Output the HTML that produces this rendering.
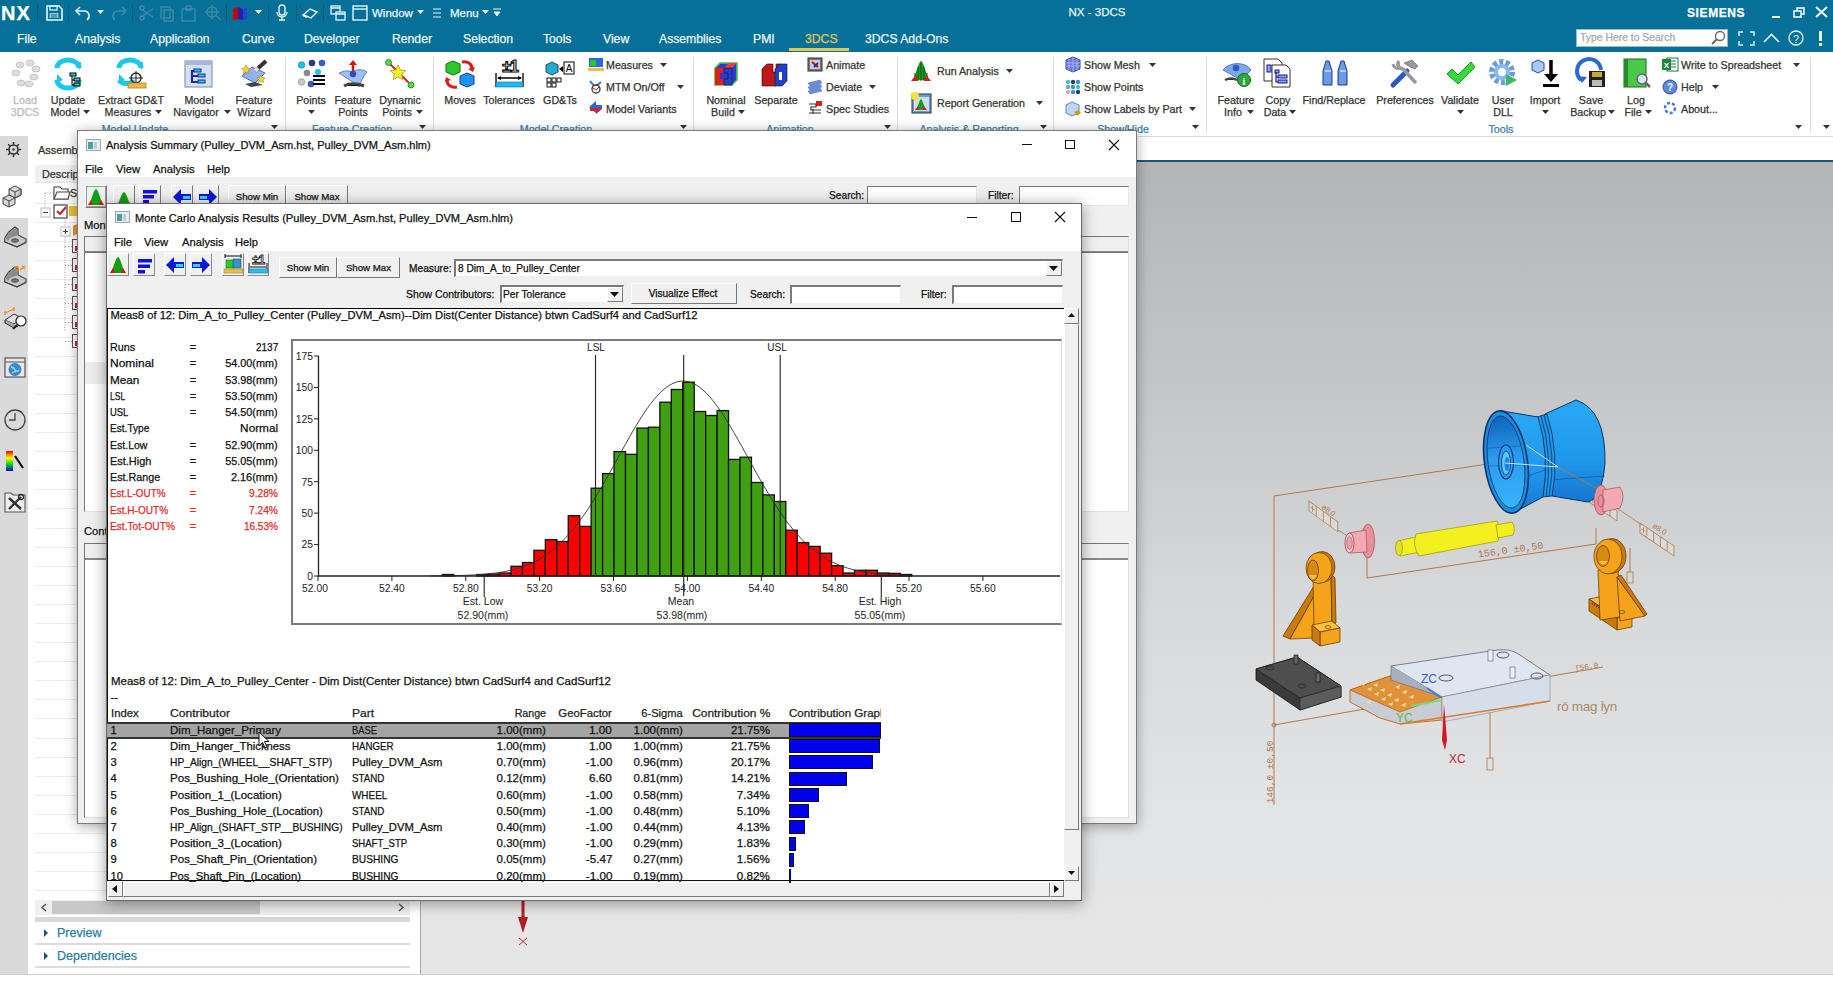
<!DOCTYPE html>
<html><head><meta charset="utf-8"><title>NX - 3DCS</title>
<style>
*{margin:0;padding:0;box-sizing:border-box}
html,body{width:1833px;height:992px;overflow:hidden;background:#fff;font-family:"Liberation Sans",sans-serif;font-size:12px;color:#222;position:relative}
.a{position:absolute}
.t{position:absolute;white-space:nowrap;-webkit-text-stroke:0.25px currentColor}
svg{overflow:visible}
</style></head><body>
<div class="a" style="left:0px;top:0px;width:1833px;height:52px;background:#067098"></div>
<div class="t" style="left:1px;top:0.0px;font-size:20px;line-height:26px;color:#fff;font-weight:bold;letter-spacing:1px">NX</div>
<div class="a" style="left:37px;top:5px;width:1px;height:16px;background:rgba(0,0,0,.18)"></div>
<div class="a" style="left:68px;top:5px;width:1px;height:16px;background:rgba(0,0,0,.18)"></div>
<div class="a" style="left:132px;top:5px;width:1px;height:16px;background:rgba(0,0,0,.18)"></div>
<div class="a" style="left:226px;top:5px;width:1px;height:16px;background:rgba(0,0,0,.18)"></div>
<div class="a" style="left:268px;top:5px;width:1px;height:16px;background:rgba(0,0,0,.18)"></div>
<div class="a" style="left:296px;top:5px;width:1px;height:16px;background:rgba(0,0,0,.18)"></div>
<div class="a" style="left:323px;top:5px;width:1px;height:16px;background:rgba(0,0,0,.18)"></div>
<svg class="a" style="left:46px;top:5px;" width="17" height="16" viewBox="0 0 17 16"><path d="M1 1h12l3 3v11H1z" fill="none" stroke="#dff" stroke-width="1.6"/><rect x="4" y="1" width="7" height="4" fill="none" stroke="#dff" stroke-width="1.2"/><rect x="3.5" y="8" width="9" height="5" fill="#9cc4d6"/><path d="M5 10h6M5 12h6" stroke="#067098" stroke-width="1"/></svg>
<svg class="a" style="left:74px;top:5px;" width="17" height="16" viewBox="0 0 17 16"><path d="M3 6h8a5 5 0 0 1 2 9" fill="none" stroke="#e6f4fa" stroke-width="1.6"/><path d="M6 2L2 6l4 4" fill="none" stroke="#e6f4fa" stroke-width="1.6"/></svg>
<svg class="a" style="left:97px;top:10px;" width="7" height="5" viewBox="0 0 7 5"><path d="M0 0h7L3.5 4z" fill="#e6f4fa"/></svg>
<svg class="a" style="left:111px;top:5px;" width="17" height="16" viewBox="0 0 17 16"><path d="M14 6H6a5 5 0 0 0-2 9" fill="none" stroke="#3f8aa9" stroke-width="1.6"/><path d="M11 2l4 4-4 4" fill="none" stroke="#3f8aa9" stroke-width="1.6"/></svg>
<svg class="a" style="left:139px;top:5px;" width="84" height="16" viewBox="0 0 84 16"><g fill="none" stroke="#3f8aa9" stroke-width="1.4"><path d="M2 12l12-8M2 4l12 8"/><circle cx="3" cy="13" r="2"/><circle cx="3" cy="3" r="2"/><rect x="22" y="2" width="9" height="11"/><rect x="25" y="5" width="9" height="11"/><rect x="43" y="4" width="13" height="12"/><rect x="47" y="1" width="5" height="4"/><circle cx="73" cy="7" r="5"/><path d="M66 7h14M73 0v14M76 10l6 5"/></g></svg>
<svg class="a" style="left:232px;top:6px;" width="16" height="14" viewBox="0 0 16 14"><path d="M1 3l5-2v12l-5 1z" fill="#c00"/><path d="M6 1l5 2v11l-5-1z" fill="#22a"/><path d="M11 3l4-1v11l-4 1z" fill="#2244dd"/></svg>
<svg class="a" style="left:255px;top:10px;" width="7" height="5" viewBox="0 0 7 5"><path d="M0 0h7L3.5 4z" fill="#e6f4fa"/></svg>
<svg class="a" style="left:276px;top:4px;" width="12" height="17" viewBox="0 0 12 17"><rect x="3" y="1" width="6" height="10" rx="3" fill="none" stroke="#e6f4fa" stroke-width="1.4"/><path d="M1 8a5 5 0 0 0 10 0M6 13v3M3 16h6" fill="none" stroke="#e6f4fa" stroke-width="1.3"/></svg>
<svg class="a" style="left:302px;top:7px;" width="16" height="12" viewBox="0 0 16 12"><path d="M1 8l7-6 7 3-6 6z" fill="none" stroke="#e6f4fa" stroke-width="1.4"/><path d="M1 8l4 2" stroke="#e6f4fa" stroke-width="2"/></svg>
<svg class="a" style="left:330px;top:5px;" width="16" height="16" viewBox="0 0 16 16"><g fill="none" stroke="#e6f4fa" stroke-width="1.3"><rect x="1" y="1" width="9" height="8"/><rect x="6" y="7" width="9" height="8" fill="#067098"/><path d="M1 3h9M6 9h9"/></g></svg>
<svg class="a" style="left:352px;top:5px;" width="16" height="16" viewBox="0 0 16 16"><g fill="none" stroke="#e6f4fa" stroke-width="1.4"><rect x="1" y="1" width="14" height="14"/><path d="M1 4h14"/></g></svg>
<div class="t" style="left:372px;top:5.5px;font-size:11.5px;line-height:15px;color:#eaf6fb;font-weight:normal;">Window</div>
<svg class="a" style="left:417px;top:10px;" width="7" height="5" viewBox="0 0 7 5"><path d="M0 0h7L3.5 4z" fill="#e6f4fa"/></svg>
<svg class="a" style="left:433px;top:8px;" width="8" height="10" viewBox="0 0 8 10"><path d="M0 1h8M0 5h8M0 9h8" stroke="#e6f4fa" stroke-width="1.2"/></svg>
<div class="t" style="left:450px;top:5.5px;font-size:11.5px;line-height:15px;color:#eaf6fb;font-weight:normal;">Menu</div>
<svg class="a" style="left:482px;top:10px;" width="7" height="5" viewBox="0 0 7 5"><path d="M0 0h7L3.5 4z" fill="#e6f4fa"/></svg>
<svg class="a" style="left:493px;top:8px;" width="8" height="9" viewBox="0 0 8 9"><path d="M0 1h8M1 4h6L4 8z" stroke="#e6f4fa" fill="#e6f4fa" stroke-width="1"/></svg>
<div class="t" style="left:797px;width:600px;text-align:center;top:4.5px;font-size:11.5px;line-height:15px;color:#e6f2f7;font-weight:normal;">NX - 3DCS</div>
<div class="t" style="left:1687px;top:5.0px;font-size:12px;line-height:16px;color:#fff;font-weight:bold;letter-spacing:0.6px">SIEMENS</div>
<div class="a" style="left:1772px;top:16px;width:8px;height:2px;background:#fff"></div>
<svg class="a" style="left:1793px;top:7px;" width="12" height="12" viewBox="0 0 12 12"><g fill="none" stroke="#fff" stroke-width="1.5"><rect x="1" y="4" width="7" height="6"/><path d="M4 4V1h7v6H8"/></g></svg>
<svg class="a" style="left:1815px;top:6px;" width="13" height="12" viewBox="0 0 13 12"><path d="M1 1l11 10M12 1L1 11" stroke="#fff" stroke-width="1.8"/></svg>
<div class="t" style="left:17px;top:31.0px;font-size:12.2px;line-height:16px;color:#eaf6fb;font-weight:normal;">File</div>
<div class="t" style="left:75px;top:31.0px;font-size:12.2px;line-height:16px;color:#eaf6fb;font-weight:normal;">Analysis</div>
<div class="t" style="left:150px;top:31.0px;font-size:12.2px;line-height:16px;color:#eaf6fb;font-weight:normal;">Application</div>
<div class="t" style="left:242px;top:31.0px;font-size:12.2px;line-height:16px;color:#eaf6fb;font-weight:normal;">Curve</div>
<div class="t" style="left:304px;top:31.0px;font-size:12.2px;line-height:16px;color:#eaf6fb;font-weight:normal;">Developer</div>
<div class="t" style="left:392px;top:31.0px;font-size:12.2px;line-height:16px;color:#eaf6fb;font-weight:normal;">Render</div>
<div class="t" style="left:463px;top:31.0px;font-size:12.2px;line-height:16px;color:#eaf6fb;font-weight:normal;">Selection</div>
<div class="t" style="left:543px;top:31.0px;font-size:12.2px;line-height:16px;color:#eaf6fb;font-weight:normal;">Tools</div>
<div class="t" style="left:603px;top:31.0px;font-size:12.2px;line-height:16px;color:#eaf6fb;font-weight:normal;">View</div>
<div class="t" style="left:659px;top:31.0px;font-size:12.2px;line-height:16px;color:#eaf6fb;font-weight:normal;">Assemblies</div>
<div class="t" style="left:753px;top:31.0px;font-size:12.2px;line-height:16px;color:#eaf6fb;font-weight:normal;">PMI</div>
<div class="t" style="left:805px;top:31.0px;font-size:12.2px;line-height:16px;color:#e3c655;font-weight:normal;">3DCS</div>
<div class="t" style="left:865px;top:31.0px;font-size:12.2px;line-height:16px;color:#eaf6fb;font-weight:normal;">3DCS Add-Ons</div>
<div class="a" style="left:789px;top:48px;width:60px;height:3px;background:#e3c655"></div>
<div class="a" style="left:1576px;top:29px;width:152px;height:18px;background:#fff;border:1px solid #9fb9c6"></div>
<div class="t" style="left:1580px;top:31.0px;font-size:10.4px;line-height:14px;color:#a9a9a9;font-weight:normal;">Type Here to Search</div>
<svg class="a" style="left:1710px;top:30px;" width="16" height="16" viewBox="0 0 16 16"><circle cx="10" cy="6" r="4.5" fill="none" stroke="#666" stroke-width="1.3"/><path d="M7 9l-5 5" stroke="#666" stroke-width="2"/></svg>
<svg class="a" style="left:1738px;top:31px;" width="17" height="15" viewBox="0 0 17 15"><path d="M1 5V1h4M12 1h4v4M16 10v4h-4M5 14H1v-4" fill="none" stroke="#d6eef6" stroke-width="1.5"/></svg>
<svg class="a" style="left:1763px;top:33px;" width="17" height="10" viewBox="0 0 17 10"><path d="M1 9l7.5-7.5L16 9" fill="none" stroke="#e6f4fa" stroke-width="1.6"/></svg>
<svg class="a" style="left:1788px;top:30px;" width="16" height="16" viewBox="0 0 16 16"><circle cx="8" cy="8" r="7" fill="none" stroke="#e6f4fa" stroke-width="1.3"/><text x="8" y="12.5" font-size="11" text-anchor="middle" fill="#e6f4fa" font-family="Liberation Sans">?</text></svg>
<div class="a" style="left:1819px;top:31px;width:3px;height:10px;background:#e6f4fa"></div>
<div class="a" style="left:1819px;top:43px;width:3px;height:3px;background:#e6f4fa"></div>
<div class="a" style="left:0px;top:52px;width:1833px;height:85px;background:#fff;border-bottom:1px solid #d0d0d0"></div>
<div class="a" style="left:285px;top:57px;width:1px;height:76px;background:#dedede"></div>
<div class="a" style="left:433px;top:57px;width:1px;height:76px;background:#dedede"></div>
<div class="a" style="left:693px;top:57px;width:1px;height:76px;background:#dedede"></div>
<div class="a" style="left:897px;top:57px;width:1px;height:76px;background:#dedede"></div>
<div class="a" style="left:1053px;top:57px;width:1px;height:76px;background:#dedede"></div>
<div class="a" style="left:1206px;top:57px;width:1px;height:76px;background:#dedede"></div>
<div class="a" style="left:1810px;top:57px;width:1px;height:76px;background:#dedede"></div>
<div class="t" style="left:-275px;width:600px;text-align:center;top:92.5px;font-size:10.7px;line-height:14px;color:#b9b9b9;font-weight:normal;">Load</div>
<div class="t" style="left:-275px;width:600px;text-align:center;top:105.0px;font-size:10.7px;line-height:14px;color:#b9b9b9;font-weight:normal;">3DCS</div>
<div class="t" style="left:-232px;width:600px;text-align:center;top:92.5px;font-size:10.7px;line-height:14px;color:#333;font-weight:normal;">Update</div>
<div class="t" style="left:-235px;width:600px;text-align:center;top:105.0px;font-size:10.7px;line-height:14px;color:#333;font-weight:normal;">Model</div>
<svg class="a" style="left:83px;top:110px;" width="7" height="4" viewBox="0 0 7 4"><path d="M0 0h7L3.5 4z" fill="#333"/></svg>
<div class="t" style="left:-169px;width:600px;text-align:center;top:92.5px;font-size:10.7px;line-height:14px;color:#333;font-weight:normal;">Extract GD&amp;T</div>
<div class="t" style="left:-172px;width:600px;text-align:center;top:105.0px;font-size:10.7px;line-height:14px;color:#333;font-weight:normal;">Measures</div>
<svg class="a" style="left:155px;top:110px;" width="7" height="4" viewBox="0 0 7 4"><path d="M0 0h7L3.5 4z" fill="#333"/></svg>
<div class="t" style="left:-101px;width:600px;text-align:center;top:92.5px;font-size:10.7px;line-height:14px;color:#333;font-weight:normal;">Model</div>
<div class="t" style="left:-104px;width:600px;text-align:center;top:105.0px;font-size:10.7px;line-height:14px;color:#333;font-weight:normal;">Navigator</div>
<svg class="a" style="left:224px;top:110px;" width="7" height="4" viewBox="0 0 7 4"><path d="M0 0h7L3.5 4z" fill="#333"/></svg>
<div class="t" style="left:-46px;width:600px;text-align:center;top:92.5px;font-size:10.7px;line-height:14px;color:#333;font-weight:normal;">Feature</div>
<div class="t" style="left:-46px;width:600px;text-align:center;top:105.0px;font-size:10.7px;line-height:14px;color:#333;font-weight:normal;">Wizard</div>
<div class="t" style="left:11px;width:600px;text-align:center;top:92.5px;font-size:10.7px;line-height:14px;color:#333;font-weight:normal;">Points</div>
<svg class="a" style="left:308px;top:110px;" width="7" height="4" viewBox="0 0 7 4"><path d="M0 0h7L3.5 4z" fill="#333"/></svg>
<div class="t" style="left:53px;width:600px;text-align:center;top:92.5px;font-size:10.7px;line-height:14px;color:#333;font-weight:normal;">Feature</div>
<div class="t" style="left:53px;width:600px;text-align:center;top:105.0px;font-size:10.7px;line-height:14px;color:#333;font-weight:normal;">Points</div>
<div class="t" style="left:100px;width:600px;text-align:center;top:92.5px;font-size:10.7px;line-height:14px;color:#333;font-weight:normal;">Dynamic</div>
<div class="t" style="left:97px;width:600px;text-align:center;top:105.0px;font-size:10.7px;line-height:14px;color:#333;font-weight:normal;">Points</div>
<svg class="a" style="left:416px;top:110px;" width="7" height="4" viewBox="0 0 7 4"><path d="M0 0h7L3.5 4z" fill="#333"/></svg>
<div class="t" style="left:160px;width:600px;text-align:center;top:92.5px;font-size:10.7px;line-height:14px;color:#333;font-weight:normal;">Moves</div>
<div class="t" style="left:209px;width:600px;text-align:center;top:92.5px;font-size:10.7px;line-height:14px;color:#333;font-weight:normal;">Tolerances</div>
<div class="t" style="left:260px;width:600px;text-align:center;top:92.5px;font-size:10.7px;line-height:14px;color:#333;font-weight:normal;">GD&amp;Ts</div>
<div class="t" style="left:606px;top:58.0px;font-size:10.7px;line-height:14px;color:#333;font-weight:normal;">Measures</div>
<svg class="a" style="left:660px;top:63px;" width="7" height="4" viewBox="0 0 7 4"><path d="M0 0h7L3.5 4z" fill="#333"/></svg>
<div class="t" style="left:606px;top:80.0px;font-size:10.7px;line-height:14px;color:#333;font-weight:normal;">MTM On/Off</div>
<svg class="a" style="left:677px;top:85px;" width="7" height="4" viewBox="0 0 7 4"><path d="M0 0h7L3.5 4z" fill="#333"/></svg>
<div class="t" style="left:606px;top:102.0px;font-size:10.7px;line-height:14px;color:#333;font-weight:normal;">Model Variants</div>
<div class="t" style="left:426px;width:600px;text-align:center;top:92.5px;font-size:10.7px;line-height:14px;color:#333;font-weight:normal;">Nominal</div>
<div class="t" style="left:423px;width:600px;text-align:center;top:105.0px;font-size:10.7px;line-height:14px;color:#333;font-weight:normal;">Build</div>
<svg class="a" style="left:738px;top:110px;" width="7" height="4" viewBox="0 0 7 4"><path d="M0 0h7L3.5 4z" fill="#333"/></svg>
<div class="t" style="left:476px;width:600px;text-align:center;top:92.5px;font-size:10.7px;line-height:14px;color:#333;font-weight:normal;">Separate</div>
<div class="t" style="left:826px;top:58.0px;font-size:10.7px;line-height:14px;color:#333;font-weight:normal;">Animate</div>
<div class="t" style="left:826px;top:80.0px;font-size:10.7px;line-height:14px;color:#333;font-weight:normal;">Deviate</div>
<svg class="a" style="left:869px;top:85px;" width="7" height="4" viewBox="0 0 7 4"><path d="M0 0h7L3.5 4z" fill="#333"/></svg>
<div class="t" style="left:826px;top:102.0px;font-size:10.7px;line-height:14px;color:#333;font-weight:normal;">Spec Studies</div>
<div class="t" style="left:937px;top:64.0px;font-size:10.7px;line-height:14px;color:#333;font-weight:normal;">Run Analysis</div>
<svg class="a" style="left:1006px;top:69px;" width="7" height="4" viewBox="0 0 7 4"><path d="M0 0h7L3.5 4z" fill="#333"/></svg>
<div class="t" style="left:937px;top:96.0px;font-size:10.7px;line-height:14px;color:#333;font-weight:normal;">Report Generation</div>
<svg class="a" style="left:1036px;top:101px;" width="7" height="4" viewBox="0 0 7 4"><path d="M0 0h7L3.5 4z" fill="#333"/></svg>
<div class="t" style="left:1084px;top:58.0px;font-size:10.7px;line-height:14px;color:#333;font-weight:normal;">Show Mesh</div>
<svg class="a" style="left:1149px;top:63px;" width="7" height="4" viewBox="0 0 7 4"><path d="M0 0h7L3.5 4z" fill="#333"/></svg>
<div class="t" style="left:1084px;top:80.0px;font-size:10.7px;line-height:14px;color:#333;font-weight:normal;">Show Points</div>
<div class="t" style="left:1084px;top:102.0px;font-size:10.7px;line-height:14px;color:#333;font-weight:normal;">Show Labels by Part</div>
<svg class="a" style="left:1189px;top:107px;" width="7" height="4" viewBox="0 0 7 4"><path d="M0 0h7L3.5 4z" fill="#333"/></svg>
<div class="t" style="left:936px;width:600px;text-align:center;top:92.5px;font-size:10.7px;line-height:14px;color:#333;font-weight:normal;">Feature</div>
<div class="t" style="left:933px;width:600px;text-align:center;top:105.0px;font-size:10.7px;line-height:14px;color:#333;font-weight:normal;">Info</div>
<svg class="a" style="left:1247px;top:110px;" width="7" height="4" viewBox="0 0 7 4"><path d="M0 0h7L3.5 4z" fill="#333"/></svg>
<div class="t" style="left:978px;width:600px;text-align:center;top:92.5px;font-size:10.7px;line-height:14px;color:#333;font-weight:normal;">Copy</div>
<div class="t" style="left:975px;width:600px;text-align:center;top:105.0px;font-size:10.7px;line-height:14px;color:#333;font-weight:normal;">Data</div>
<svg class="a" style="left:1289px;top:110px;" width="7" height="4" viewBox="0 0 7 4"><path d="M0 0h7L3.5 4z" fill="#333"/></svg>
<div class="t" style="left:1034px;width:600px;text-align:center;top:92.5px;font-size:10.7px;line-height:14px;color:#333;font-weight:normal;">Find/Replace</div>
<div class="t" style="left:1105px;width:600px;text-align:center;top:92.5px;font-size:10.7px;line-height:14px;color:#333;font-weight:normal;">Preferences</div>
<div class="t" style="left:1160px;width:600px;text-align:center;top:92.5px;font-size:10.7px;line-height:14px;color:#333;font-weight:normal;">Validate</div>
<svg class="a" style="left:1457px;top:110px;" width="7" height="4" viewBox="0 0 7 4"><path d="M0 0h7L3.5 4z" fill="#333"/></svg>
<div class="t" style="left:1203px;width:600px;text-align:center;top:92.5px;font-size:10.7px;line-height:14px;color:#333;font-weight:normal;">User</div>
<div class="t" style="left:1203px;width:600px;text-align:center;top:105.0px;font-size:10.7px;line-height:14px;color:#333;font-weight:normal;">DLL</div>
<div class="t" style="left:1245px;width:600px;text-align:center;top:92.5px;font-size:10.7px;line-height:14px;color:#333;font-weight:normal;">Import</div>
<svg class="a" style="left:1542px;top:110px;" width="7" height="4" viewBox="0 0 7 4"><path d="M0 0h7L3.5 4z" fill="#333"/></svg>
<div class="t" style="left:1291px;width:600px;text-align:center;top:92.5px;font-size:10.7px;line-height:14px;color:#333;font-weight:normal;">Save</div>
<div class="t" style="left:1288px;width:600px;text-align:center;top:105.0px;font-size:10.7px;line-height:14px;color:#333;font-weight:normal;">Backup</div>
<svg class="a" style="left:1608px;top:110px;" width="7" height="4" viewBox="0 0 7 4"><path d="M0 0h7L3.5 4z" fill="#333"/></svg>
<div class="t" style="left:1336px;width:600px;text-align:center;top:92.5px;font-size:10.7px;line-height:14px;color:#333;font-weight:normal;">Log</div>
<div class="t" style="left:1333px;width:600px;text-align:center;top:105.0px;font-size:10.7px;line-height:14px;color:#333;font-weight:normal;">File</div>
<svg class="a" style="left:1645px;top:110px;" width="7" height="4" viewBox="0 0 7 4"><path d="M0 0h7L3.5 4z" fill="#333"/></svg>
<div class="t" style="left:1681px;top:58.0px;font-size:10.7px;line-height:14px;color:#333;font-weight:normal;">Write to Spreadsheet</div>
<svg class="a" style="left:1793px;top:63px;" width="7" height="4" viewBox="0 0 7 4"><path d="M0 0h7L3.5 4z" fill="#333"/></svg>
<div class="t" style="left:1681px;top:80.0px;font-size:10.7px;line-height:14px;color:#333;font-weight:normal;">Help</div>
<svg class="a" style="left:1712px;top:85px;" width="7" height="4" viewBox="0 0 7 4"><path d="M0 0h7L3.5 4z" fill="#333"/></svg>
<div class="t" style="left:1681px;top:102.0px;font-size:10.7px;line-height:14px;color:#333;font-weight:normal;">About...</div>
<div class="t" style="left:-165px;width:600px;text-align:center;top:122.0px;font-size:10.7px;line-height:14px;color:#3b7fa6;font-weight:normal;">Model Update</div>
<div class="t" style="left:52px;width:600px;text-align:center;top:122.0px;font-size:10.7px;line-height:14px;color:#3b7fa6;font-weight:normal;">Feature Creation</div>
<div class="t" style="left:256px;width:600px;text-align:center;top:122.0px;font-size:10.7px;line-height:14px;color:#3b7fa6;font-weight:normal;">Model Creation</div>
<div class="t" style="left:490px;width:600px;text-align:center;top:122.0px;font-size:10.7px;line-height:14px;color:#3b7fa6;font-weight:normal;">Animation</div>
<div class="t" style="left:669px;width:600px;text-align:center;top:122.0px;font-size:10.7px;line-height:14px;color:#3b7fa6;font-weight:normal;">Analysis &amp; Reporting</div>
<div class="t" style="left:823px;width:600px;text-align:center;top:122.0px;font-size:10.7px;line-height:14px;color:#3b7fa6;font-weight:normal;">Show/Hide</div>
<div class="t" style="left:1201px;width:600px;text-align:center;top:122.0px;font-size:10.7px;line-height:14px;color:#3b7fa6;font-weight:normal;">Tools</div>
<svg class="a" style="left:271px;top:125px;" width="7" height="4" viewBox="0 0 7 4"><path d="M0 0h7L3.5 4z" fill="#333"/></svg>
<svg class="a" style="left:419px;top:125px;" width="7" height="4" viewBox="0 0 7 4"><path d="M0 0h7L3.5 4z" fill="#333"/></svg>
<svg class="a" style="left:680px;top:125px;" width="7" height="4" viewBox="0 0 7 4"><path d="M0 0h7L3.5 4z" fill="#333"/></svg>
<svg class="a" style="left:884px;top:125px;" width="7" height="4" viewBox="0 0 7 4"><path d="M0 0h7L3.5 4z" fill="#333"/></svg>
<svg class="a" style="left:1040px;top:125px;" width="7" height="4" viewBox="0 0 7 4"><path d="M0 0h7L3.5 4z" fill="#333"/></svg>
<svg class="a" style="left:1192px;top:125px;" width="7" height="4" viewBox="0 0 7 4"><path d="M0 0h7L3.5 4z" fill="#333"/></svg>
<svg class="a" style="left:1795px;top:125px;" width="7" height="4" viewBox="0 0 7 4"><path d="M0 0h7L3.5 4z" fill="#333"/></svg>
<svg class="a" style="left:1823px;top:125px;" width="7" height="4" viewBox="0 0 7 4"><path d="M0 0h7L3.5 4z" fill="#333"/></svg>
<svg class="a" style="left:12px;top:59px;" width="28" height="28" viewBox="0 0 28 28"><g fill="#ddd" stroke="#c8c8c8"><ellipse cx="8" cy="6" rx="4" ry="3"/><ellipse cx="18" cy="4" rx="4" ry="3"/><ellipse cx="24" cy="10" rx="4" ry="3"/><ellipse cx="4" cy="14" rx="4" ry="3"/><ellipse cx="22" cy="18" rx="4" ry="3"/><ellipse cx="9" cy="24" rx="4" ry="3"/><ellipse cx="17" cy="25" rx="4" ry="3"/></g></svg>
<svg class="a" style="left:54px;top:59px;" width="30" height="30" viewBox="0 0 30 30"><path d="M3 9a11 8 0 0 1 22 0" fill="none" stroke="#19c8ee" stroke-width="5"/><path d="M20 3l7 0-1 8z" fill="#19c8ee"/><path d="M25 21a11 8 0 0 1-22 0" fill="none" stroke="#19c8ee" stroke-width="5"/><path d="M3 15l0 9 6-3z" fill="#19c8ee"/><g fill="#3cc" stroke="#000" stroke-width="1"><rect x="16" y="14" width="6" height="3"/><rect x="20" y="19" width="6" height="3"/><rect x="20" y="24" width="6" height="3"/></g><path d="M18 17v9h2M18 21h2" stroke="#000" fill="none"/></svg>
<svg class="a" style="left:116px;top:59px;" width="30" height="30" viewBox="0 0 30 30"><path d="M3 9a11 8 0 0 1 22 0" fill="none" stroke="#19c8ee" stroke-width="5"/><path d="M20 3l7 0-1 8z" fill="#19c8ee"/><path d="M18 21a9 8 0 0 1-15 0" fill="none" stroke="#19c8ee" stroke-width="5"/><path d="M3 15l0 9 6-3z" fill="#19c8ee"/><circle cx="20" cy="19" r="5" fill="none" stroke="#222" stroke-width="1.3"/><path d="M13 19h14M20 12v12" stroke="#222"/><rect x="12" y="24" width="18" height="5" fill="#f0b64b" stroke="#b77a18" stroke-width=".8"/></svg>
<svg class="a" style="left:184px;top:60px;" width="29" height="28" viewBox="0 0 29 28"><rect x="1" y="1" width="27" height="26" fill="#d6dfee" stroke="#8a9ab0" stroke-width="1.2"/><rect x="1" y="1" width="27" height="4" fill="#a8b8dd"/><path d="M8 10v13M8 11h4M8 16h6M8 22h6" stroke="#1c2aa0" stroke-width="2.2" fill="none"/><g fill="#19c8ee" stroke="#1c2aa0"><rect x="10" y="9" width="7" height="3"/><rect x="14" y="14" width="7" height="3"/><rect x="14" y="20" width="7" height="3"/></g></svg>
<svg class="a" style="left:239px;top:59px;" width="30" height="30" viewBox="0 0 30 30"><path d="M3 17l10-9 13 6-10 10z" fill="#8fb3ee" stroke="#4a6fb8"/><path d="M6 25l10-2 8 3-12 2z" fill="#444"/><path d="M16 12L27 2" stroke="#333" stroke-width="4"/><path d="M16 12l3-3" stroke="#ddd" stroke-width="4"/><path d="M7 6l1.5 3 3 .5-2.3 2 .6 3L7 13l-2.8 1.5.6-3-2.3-2 3-.5z" fill="#f5d23c" stroke="#a88a10" stroke-width=".6"/><path d="M22 16l1.3 2.5 2.7.4-2 1.8.5 2.7L22 22l-2.5 1.4.5-2.7-2-1.8 2.7-.4z" fill="#f5d23c" stroke="#a88a10" stroke-width=".6"/></svg>
<svg class="a" style="left:297px;top:59px;" width="30" height="30" viewBox="0 0 30 30"><circle cx="4.5" cy="6" r="3.3" fill="#19c4e6" stroke="#0a7fa0" stroke-width=".6"/><circle cx="15" cy="4" r="3.3" fill="#24407a"/><circle cx="25" cy="4" r="3.3" fill="#3a5bc8"/><circle cx="10" cy="14" r="3.3" fill="#8a8a8a"/><circle cx="21" cy="13" r="3" fill="#19c4e6"/><circle cx="4.5" cy="23" r="3.3" fill="#c8c8c8" stroke="#888" stroke-width=".6"/><circle cx="14" cy="25" r="3.3" fill="#3a5bc8"/><path d="M16 17h12M16 21h12M16 25h12" stroke="#000" stroke-width="2.2"/></svg>
<svg class="a" style="left:338px;top:59px;" width="30" height="30" viewBox="0 0 30 30"><path d="M15 13c5-4 11-2 14 0-4 5-6 9-8 15-4-4-14-10-20-14 5-2 9-3 14-1z" fill="#9fc0f0" stroke="#5a80c8"/><path d="M6 27c5-3 13-3 20 0" stroke="#444" stroke-width="3"/><path d="M15 16V5" stroke="#d01818" stroke-width="2.5"/><path d="M11 6l4-5 4 5z" fill="#d01818"/><circle cx="15" cy="15" r="3.2" fill="#2850b8"/></svg>
<svg class="a" style="left:385px;top:59px;" width="30" height="30" viewBox="0 0 30 30"><path d="M3 3l24 24" stroke="#d02020" stroke-width="1.8"/><circle cx="3.5" cy="3.5" r="3" fill="#58d848" stroke="#2a9a18"/><circle cx="26" cy="26" r="3" fill="#58d848" stroke="#2a9a18"/><path d="M13 6l2.3 5 5.4.6-4 3.7 1 5.3-4.7-2.7-4.7 2.7 1-5.3-4-3.7 5.4-.6z" fill="#f8f028" stroke="#a0a010" stroke-width=".8"/></svg>
<svg class="a" style="left:445px;top:59px;" width="31" height="30" viewBox="0 0 31 30"><path d="M8 2l7 3v8l-7 3-7-3V5z" fill="#2cc82c" stroke="#107010"/><path d="M22 14l7 3v8l-7 3-7-3v-8z" fill="#1e90f0" stroke="#0a4a90"/><path d="M17 3c6-1 10 2 10 7" fill="none" stroke="#e01818" stroke-width="3"/><path d="M23 10l5 3 2-5z" fill="#e01818"/><path d="M12 28c-6 1-10-2-10-7" fill="none" stroke="#e01818" stroke-width="3"/><path d="M6 21l-5-3-1 5z" fill="#e01818"/></svg>
<svg class="a" style="left:495px;top:59px;" width="30" height="30" viewBox="0 0 30 30"><text x="15" y="13" text-anchor="middle" font-size="16" font-weight="bold" font-family="Liberation Sans" fill="#fff" stroke="#000" stroke-width="1.1" letter-spacing="-1">±1</text><path d="M1 14v14M28 14v14M3 19h23" stroke="#000" stroke-width="1.3"/><path d="M2 19l4-2v4zM27 19l-4-2v4z" fill="#000"/><rect x="1" y="23" width="27" height="5" fill="#19b8f0" stroke="#0a70a0" stroke-width=".6"/></svg>
<svg class="a" style="left:545px;top:59px;" width="33" height="30" viewBox="0 0 33 30"><path d="M7 3l6 3v7l-6 3-6-3V6z" fill="#2aa8d0" stroke="#0a5070"/><path d="M14 10l4-3v6z" fill="#000"/><rect x="19" y="3" width="10" height="12" fill="#fff" stroke="#000"/><text x="24" y="13" text-anchor="middle" font-size="10" font-family="Liberation Sans">A</text><g fill="#fff" stroke="#000" stroke-width=".9"><rect x="2" y="19" width="4" height="4"/><rect x="7" y="19" width="4" height="4"/><rect x="12" y="19" width="4" height="4"/><rect x="2" y="24" width="4" height="4"/><rect x="7" y="24" width="4" height="4"/></g></svg>
<svg class="a" style="left:588px;top:57px;" width="16" height="15" viewBox="0 0 16 15"><rect x="1" y="1" width="14" height="9" fill="#2a6ad8"/><rect x="2" y="3" width="6" height="6" fill="#2cc82c"/><rect x="0" y="11" width="16" height="3" fill="#e8c050"/></svg>
<svg class="a" style="left:588px;top:79px;" width="14" height="15" viewBox="0 0 14 15"><path d="M2 2l5 6 6-5" stroke="#3a7ad8" stroke-width="2" fill="none"/><circle cx="8" cy="10" r="4" fill="#fff" stroke="#333" stroke-width="1.3"/><path d="M5 9l3 2 3-3" stroke="#c00" fill="none"/></svg>
<svg class="a" style="left:588px;top:100px;" width="15" height="15" viewBox="0 0 15 15"><path d="M1 7l7-6v4h6v4H8v4z" fill="#2a6ad8"/><path d="M14 9l-6 5v-3H2V8h6z" fill="#e02020"/></svg>
<svg class="a" style="left:712px;top:60px;" width="27" height="28" viewBox="0 0 27 28"><path d="M3 8l5-5h17v17l-5 5H3z" fill="#2a3ad8" stroke="#4c4" stroke-width="1.6"/><path d="M3 8h9v5H8v6h4v6H3z" fill="#e02020"/><path d="M12 8l5-5h8l-5 5z" fill="#e84040"/><path d="M12 8h8v17h-8v-6h4v-6h-4z" fill="#2040d0" stroke="#112" stroke-width=".6"/></svg>
<svg class="a" style="left:761px;top:60px;" width="27" height="28" viewBox="0 0 27 28"><path d="M1 9l5-5h6v8h3V4l5 0-5 5v17H1z" fill="#c01818" stroke="#300" stroke-width=".6"/><path d="M14 9l5-5h7v17l-5 5h-7z" fill="#2040c8" stroke="#112" stroke-width=".6"/><path d="M18 12h3v8h-3z" fill="#fff"/></svg>
<svg class="a" style="left:807px;top:57px;" width="16" height="15" viewBox="0 0 16 15"><rect x="1" y="1" width="14" height="13" fill="#777" stroke="#333"/><rect x="3" y="3" width="10" height="9" fill="#ccc"/><path d="M5 5l6 5" stroke="#c00" stroke-width="2"/><path d="M7 10l4-4" stroke="#22c" stroke-width="2"/></svg>
<svg class="a" style="left:807px;top:79px;" width="16" height="15" viewBox="0 0 16 15"><path d="M1 4l12-3 2 3-12 3zM1 8l12-3 2 3-12 3zM1 12l12-3 2 3-12 3z" fill="#6b8ed8" stroke="#4a6ab8" stroke-width=".5"/></svg>
<svg class="a" style="left:807px;top:100px;" width="16" height="15" viewBox="0 0 16 15"><rect x="9" y="1" width="6" height="5" fill="#d82020"/><path d="M2 4h7v3H4v3h10M2 13h12M6 9v5" stroke="#333" stroke-width="1.2" fill="none"/></svg>
<svg class="a" style="left:910px;top:59px;" width="23" height="23" viewBox="0 0 23 23"><path d="M2 21c3-1 6-18 9-19 3 1 6 18 9 19z" fill="#1a9a1a"/><path d="M5 14v8M8 8v14M11 4v18M14 8v14M17 14v8" stroke="#0a5a0a" stroke-width="1"/><path d="M1 22l5-6 2 6zM21 22l-5-6-2 6z" fill="#e01818"/></svg>
<svg class="a" style="left:910px;top:92px;" width="22" height="22" viewBox="0 0 22 22"><rect x="2" y="2" width="19" height="19" fill="#6a9ad8" stroke="#333"/><rect x="4" y="5" width="15" height="14" fill="#cde"/><path d="M5 18c3-1 4-10 6-11 2 1 3 10 6 11z" fill="#1a9a1a"/><path d="M5 18l3-4 1 4zM17 18l-3-4-1 4z" fill="#e01818"/><circle cx="5" cy="4" r="4" fill="#f8e040"/></svg>
<svg class="a" style="left:1065px;top:56px;" width="16" height="16" viewBox="0 0 16 16"><path d="M1 4l7-3 7 3v9l-7 3-7-3z" fill="#6a7ae0" stroke="#3a4ab0"/><path d="M4 3v11M8 1v15M12 3v11M1 7h14M1 10h14" stroke="#c8d0ff" stroke-width=".6"/></svg>
<svg class="a" style="left:1065px;top:79px;" width="16" height="16" viewBox="0 0 16 16"><g fill="#4a8ac8"><circle cx="3" cy="3" r="2.2" fill="#3cc"/><circle cx="8" cy="3" r="2.2" fill="#246"/><circle cx="13" cy="3" r="2.2"/><circle cx="3" cy="8" r="2.2" fill="#999"/><circle cx="8" cy="8" r="2.2"/><circle cx="13" cy="8" r="2.2" fill="#3cc"/><circle cx="3" cy="13" r="2.2" fill="#bbb"/><circle cx="8" cy="13" r="2.2"/><circle cx="13" cy="13" r="2.2" fill="#246"/></g></svg>
<svg class="a" style="left:1065px;top:101px;" width="16" height="16" viewBox="0 0 16 16"><path d="M1 4l6-3 7 3v8l-7 3-6-3z" fill="#bcd8f8" stroke="#5a88c8"/><path d="M9 11l4-2 3 3-4 3z" fill="#c8a018"/></svg>
<svg class="a" style="left:1222px;top:58px;" width="30" height="30" viewBox="0 0 30 30"><path d="M1 12c6-8 22-9 28 0l-10 10z" fill="#7aa8ea" stroke="#3a68c0" stroke-width=".8"/><path d="M3 22c4-2 8-2 12 0" stroke="#444" stroke-width="2.5"/><circle cx="14" cy="10" r="3.3" fill="#2a5ac8"/><circle cx="22" cy="22" r="6.5" fill="#2ca83c" stroke="#0a6a1a"/><text x="22" y="26.5" text-anchor="middle" font-size="10" font-weight="bold" fill="#fff" font-family="Liberation Serif">i</text></svg>
<svg class="a" style="left:1263px;top:58px;" width="30" height="30" viewBox="0 0 30 30"><path d="M1 1h14l4 4v18H1z" fill="#fff" stroke="#333" stroke-width="1"/><path d="M9 7h14l4 4v18H9z" fill="#fff" stroke="#333" stroke-width="1"/><g fill="#8aa0f0" stroke="#1a1a90" stroke-width="1"><rect x="4" y="7" width="4" height="7"/><rect x="12" y="12" width="4" height="3"/><rect x="15" y="17" width="9" height="3"/><rect x="15" y="22" width="9" height="3"/></g><path d="M13 14v10h2M13 19h2" stroke="#1a1a90" fill="none" stroke-width="1.2"/></svg>
<svg class="a" style="left:1320px;top:58px;" width="30" height="30" viewBox="0 0 30 30"><path d="M3 27v-14l3-10h3l3 10v14z" fill="#6a9ae8" stroke="#1a3a90" stroke-width="1"/><path d="M18 27v-14l3-10h3l3 10v14z" fill="#6a9ae8" stroke="#1a3a90" stroke-width="1"/><path d="M5 13h6M20 13h6" stroke="#b8d0ff" stroke-width="2"/></svg>
<svg class="a" style="left:1390px;top:58px;" width="30" height="30" viewBox="0 0 30 30"><path d="M3 27L17 13" stroke="#2a5ac8" stroke-width="5" stroke-linecap="round"/><path d="M9 3a5 5 0 0 0 4 8l13 14" stroke="#999" stroke-width="3.5" fill="none"/><path d="M3 6a5 5 0 0 0 7 4" stroke="#999" stroke-width="3" fill="none"/><path d="M14 5l8-3 6 6-3 3-5-2z" fill="#999" stroke="#666" stroke-width=".6"/></svg>
<svg class="a" style="left:1445px;top:58px;" width="30" height="30" viewBox="0 0 30 30"><path d="M2 16l5-5 6 6L26 4l4 5-17 17z" fill="#38d838" stroke="#1a9a1a"/></svg>
<svg class="a" style="left:1488px;top:58px;" width="30" height="30" viewBox="0 0 30 30"><circle cx="14" cy="14" r="10" fill="none" stroke="#6a9ae8" stroke-width="6" stroke-dasharray="4 2.3"/><circle cx="14" cy="14" r="8" fill="#8ab8f0"/><circle cx="14" cy="14" r="4" fill="#fff"/><path d="M18 16l11 6-11 6z" fill="#3aba5a"/></svg>
<svg class="a" style="left:1530px;top:58px;" width="30" height="30" viewBox="0 0 30 30"><path d="M2 5l6-3 6 3v7l-6 3-6-3z" fill="#a8c8f8" stroke="#2a4ab0"/><path d="M21 2v17" stroke="#000" stroke-width="3.5"/><path d="M14 16h14l-7 8z" fill="#000"/><rect x="13" y="26" width="16" height="3" fill="#000"/></svg>
<svg class="a" style="left:1576px;top:58px;" width="30" height="30" viewBox="0 0 30 30"><path d="M5 22A12 12 0 1 1 25 12" fill="none" stroke="#2a6ad8" stroke-width="4"/><path d="M1 18l5 7 5-6z" fill="#2a6ad8"/><rect x="13" y="13" width="16" height="16" fill="#222"/><rect x="16" y="14" width="10" height="5" fill="#c8a830"/><rect x="16" y="22" width="10" height="6" fill="#bbb"/></svg>
<svg class="a" style="left:1622px;top:58px;" width="29" height="30" viewBox="0 0 29 30"><rect x="2" y="1" width="22" height="28" fill="#4ac84a" stroke="#1a6a1a"/><rect x="2" y="1" width="4" height="28" fill="#2a8a2a"/><circle cx="20" cy="21" r="5" fill="#d8e8f8" stroke="#666" stroke-width="1.5"/><path d="M24 25l4 4" stroke="#666" stroke-width="2.5"/></svg>
<svg class="a" style="left:1662px;top:57px;" width="16" height="15" viewBox="0 0 16 15"><rect x="5" y="1" width="11" height="13" fill="#fff" stroke="#1a7a3a"/><path d="M7 4h7M7 7h7M7 10h7" stroke="#1a7a3a"/><rect x="0" y="2" width="9" height="11" fill="#1a8a3a"/><text x="4.5" y="11" font-size="8" text-anchor="middle" fill="#fff" font-weight="bold" font-family="Liberation Sans">X</text></svg>
<svg class="a" style="left:1662px;top:79px;" width="16" height="16" viewBox="0 0 16 16"><circle cx="8" cy="8" r="7" fill="#5a8ae0" stroke="#2a4a98"/><text x="8" y="12" text-anchor="middle" font-size="10" fill="#fff" font-weight="bold" font-family="Liberation Sans">?</text></svg>
<svg class="a" style="left:1662px;top:100px;" width="16" height="15" viewBox="0 0 16 15"><circle cx="8" cy="8" r="5" fill="none" stroke="#4a7ac8" stroke-width="2.5" stroke-dasharray="3 2"/></svg>
<div class="a" style="left:0px;top:136px;width:28px;height:838px;background:#dadada"></div>
<div class="a" style="left:0px;top:176px;width:28px;height:42px;background:#fff"></div>
<svg class="a" style="left:6px;top:142px;" width="15" height="15" viewBox="0 0 15 15"><circle cx="7.5" cy="7.5" r="4.5" fill="none" stroke="#333" stroke-width="1.6"/><circle cx="7.5" cy="7.5" r="1.2" fill="#333"/><g stroke="#333" stroke-width="1.6"><path d="M7.5 0v2.5M7.5 12.5V15M0 7.5h2.5M12.5 7.5H15M2.2 2.2l1.8 1.8M11 11l1.8 1.8M2.2 12.8L4 11M11 4l1.8-1.8"/></g></svg>
<svg class="a" style="left:4px;top:184px;" width="22" height="26" viewBox="0 0 22 26"><g stroke="#444" stroke-width="1" fill="#d8d8d8"><path d="M11 2l6 3v6l-6 3-6-3V5z"/><path d="M5 5l6 3 6-3M11 8v6" fill="none"/><path d="M5 11l6 3v6l-6 3-6-3v-6z" transform="translate(0 0)"/><path d="M-1 14l6 3 6-3M5 17v6" fill="none"/><path d="M5 11v0"/></g><path d="M17 5v6l-6 3" fill="#bbb" stroke="#444"/></svg>
<svg class="a" style="left:0px;top:0px;" width="30" height="340" viewBox="0 0 30 340"><path d="M4.8 238L8.5 232L15 227L18 229L18 235L26 239L26 242.4L17 247L4.8 242Z" fill="#c8c8c8" stroke="#3a3a3a" stroke-width="1.1"/><path d="M5.5 238L9 232.5L15 228L17 229.5L17 235.5L10 238L8 241Z" fill="#8c8c8c"/><path d="M4.8 242L17 247L26 242.4" fill="none" stroke="#3a3a3a" stroke-width="1"/><ellipse cx="15" cy="240.5" rx="3.6" ry="1.7" fill="#777" stroke="#333" stroke-width=".8"/><path d="M4.8 278L8.5 272L15 267L18 269L18 275L26 279L26 282.4L17 287L4.8 282Z" fill="#c8c8c8" stroke="#3a3a3a" stroke-width="1.1"/><path d="M5.5 278L9 272.5L15 268L17 269.5L17 275.5L10 278L8 281Z" fill="#8c8c8c"/><path d="M4.8 282L17 287L26 282.4" fill="none" stroke="#3a3a3a" stroke-width="1"/><ellipse cx="15" cy="280.5" rx="3.6" ry="1.7" fill="#777" stroke="#333" stroke-width=".8"/><path d="M14 268l4 -2M18 266v6M20 270l4-3M22 266l3 3M25 266l-3 3" stroke="#f08a10" stroke-width="1.2" fill="none"/><path d="M5 320l9-6 8 4-8 6z" fill="#e0e0e0" stroke="#333" stroke-width="1"/><path d="M5 320v3l9 5 4-2" fill="#aaa" stroke="#333" stroke-width="1"/><circle cx="21" cy="321" r="5" fill="#fff" stroke="#222" stroke-width="1.2"/><path d="M17 325l-4 4" stroke="#222" stroke-width="2"/><path d="M5 313l9-4M5 311v4M14 307v4" stroke="#f08a10" stroke-width="1.3"/></svg>
<svg class="a" style="left:4px;top:357px;" width="22" height="22" viewBox="0 0 22 22"><rect x="1" y="1" width="20" height="19" fill="#e8e8e8" stroke="#555" stroke-width="1.2"/><path d="M1 5h20" stroke="#555"/><circle cx="11" cy="12.5" r="6.5" fill="#3a8ad0"/><path d="M7 10c2 0 3 1 4 3s3 1 4 0M8 16c1-1 2-2 4-1" stroke="#9de" stroke-width="1.3" fill="none"/></svg>
<svg class="a" style="left:4px;top:409px;" width="22" height="22" viewBox="0 0 22 22"><circle cx="11" cy="11" r="10" fill="none" stroke="#444" stroke-width="1.3"/><path d="M11 4v7H5" stroke="#444" stroke-width="1.3" fill="none"/></svg>
<svg class="a" style="left:5px;top:450px;" width="20" height="22" viewBox="0 0 20 22"><defs><linearGradient id="rb" x1="0" y1="0" x2="0" y2="1"><stop offset="0" stop-color="#f00"/><stop offset=".35" stop-color="#ff0"/><stop offset=".65" stop-color="#0d0"/><stop offset="1" stop-color="#00f"/></linearGradient></defs><rect x="1" y="1" width="7" height="20" fill="url(#rb)"/><path d="M10 6l8 12" stroke="#111" stroke-width="2.2"/></svg>
<svg class="a" style="left:4px;top:489px;" width="22" height="24" viewBox="0 0 22 24"><path d="M1 4h6l2 2h12v17H1z" fill="#eee" stroke="#555" stroke-width="1.1"/><path d="M5 20L17 8M5 9l12 11" stroke="#333" stroke-width="2.4"/><circle cx="17" cy="8" r="2.5" fill="none" stroke="#333" stroke-width="1.3"/></svg>
<div class="a" style="left:28px;top:136px;width:392px;height:838px;background:#fff"></div>
<div class="t" style="left:38px;top:143.0px;font-size:11px;line-height:14px;color:#333;font-weight:normal;">Assembly Navigator</div>
<div class="a" style="left:35px;top:165px;width:376px;height:18px;background:#f0f0f0;border-bottom:1px solid #e2e2e2"></div>
<div class="t" style="left:42px;top:167.0px;font-size:10.8px;line-height:14px;color:#333;font-weight:normal;">Description</div>
<div class="t" style="left:70px;top:186.0px;font-size:10.8px;line-height:14px;color:#333;font-weight:normal;">Sections</div>
<div class="a" style="left:35px;top:203px;width:376px;height:1px;background:#ececec"></div>
<div class="a" style="left:35px;top:222px;width:376px;height:1px;background:#ececec"></div>
<div class="a" style="left:35px;top:241px;width:376px;height:1px;background:#ececec"></div>
<div class="a" style="left:35px;top:260px;width:376px;height:1px;background:#ececec"></div>
<div class="a" style="left:35px;top:279px;width:376px;height:1px;background:#ececec"></div>
<div class="a" style="left:35px;top:298px;width:376px;height:1px;background:#ececec"></div>
<div class="a" style="left:35px;top:318px;width:376px;height:1px;background:#ececec"></div>
<div class="a" style="left:35px;top:337px;width:376px;height:1px;background:#ececec"></div>
<div class="a" style="left:35px;top:356px;width:376px;height:1px;background:#ececec"></div>
<div class="a" style="left:35px;top:375px;width:376px;height:1px;background:#ececec"></div>
<div class="a" style="left:35px;top:394px;width:376px;height:1px;background:#ececec"></div>
<div class="a" style="left:35px;top:413px;width:376px;height:1px;background:#ececec"></div>
<div class="a" style="left:35px;top:432px;width:376px;height:1px;background:#ececec"></div>
<div class="a" style="left:35px;top:451px;width:376px;height:1px;background:#ececec"></div>
<div class="a" style="left:35px;top:470px;width:376px;height:1px;background:#ececec"></div>
<div class="a" style="left:35px;top:489px;width:376px;height:1px;background:#ececec"></div>
<div class="a" style="left:35px;top:508px;width:376px;height:1px;background:#ececec"></div>
<div class="a" style="left:35px;top:528px;width:376px;height:1px;background:#ececec"></div>
<div class="a" style="left:35px;top:547px;width:376px;height:1px;background:#ececec"></div>
<div class="a" style="left:35px;top:566px;width:376px;height:1px;background:#ececec"></div>
<div class="a" style="left:35px;top:585px;width:376px;height:1px;background:#ececec"></div>
<div class="a" style="left:35px;top:604px;width:376px;height:1px;background:#ececec"></div>
<div class="a" style="left:35px;top:623px;width:376px;height:1px;background:#ececec"></div>
<div class="a" style="left:35px;top:642px;width:376px;height:1px;background:#ececec"></div>
<div class="a" style="left:35px;top:661px;width:376px;height:1px;background:#ececec"></div>
<div class="a" style="left:35px;top:680px;width:376px;height:1px;background:#ececec"></div>
<div class="a" style="left:35px;top:699px;width:376px;height:1px;background:#ececec"></div>
<div class="a" style="left:35px;top:718px;width:376px;height:1px;background:#ececec"></div>
<div class="a" style="left:35px;top:738px;width:376px;height:1px;background:#ececec"></div>
<div class="a" style="left:35px;top:757px;width:376px;height:1px;background:#ececec"></div>
<div class="a" style="left:35px;top:776px;width:376px;height:1px;background:#ececec"></div>
<div class="a" style="left:35px;top:795px;width:376px;height:1px;background:#ececec"></div>
<div class="a" style="left:35px;top:814px;width:376px;height:1px;background:#ececec"></div>
<div class="a" style="left:35px;top:833px;width:376px;height:1px;background:#ececec"></div>
<div class="a" style="left:35px;top:852px;width:376px;height:1px;background:#ececec"></div>
<div class="a" style="left:35px;top:871px;width:376px;height:1px;background:#ececec"></div>
<div class="a" style="left:35px;top:890px;width:376px;height:1px;background:#ececec"></div>
<svg class="a" style="left:40px;top:186px;" width="40" height="150" viewBox="0 0 40 150"><path d="M5 7h9M5 7v21" stroke="#999" stroke-dasharray="1 1.5" fill="none"/><path d="M14 1h6l2 2h6v10H14z" fill="#fff" stroke="#444" stroke-width="1.1"/><path d="M14 13l3-7h13l-2 7z" fill="#fff" stroke="#444" stroke-width="1.1"/><rect x="1" y="22" width="9" height="9" fill="#fff" stroke="#bbb"/><path d="M3 26.5h5" stroke="#444"/><rect x="14" y="19" width="13" height="13" fill="#fff" stroke="#444" stroke-width="1.2"/><path d="M17 25l3 3 6-7" stroke="#d0202a" stroke-width="2" fill="none"/><path d="M29 20h8v10h-8z" fill="#e8c030"/><path d="M25 31v115" stroke="#999" stroke-dasharray="1 1.5"/><rect x="21" y="41" width="9" height="9" fill="#fff" stroke="#bbb"/><path d="M23 45.5h5M25.5 43v5" stroke="#444"/><path d="M33 40l4-2v10l-4 2z" fill="#f09030"/></svg>
<div class="a" style="left:65px;top:246px;width:12px;height:1px;background:repeating-linear-gradient(90deg,#999 0 1px,transparent 1px 3px)"></div>
<div class="a" style="left:72px;top:239px;width:6px;height:14px;border:1px solid #555;border-right:none;background:#fff"></div>
<div class="a" style="left:75px;top:246px;width:2px;height:5px;background:#d02030"></div>
<div class="a" style="left:65px;top:265px;width:12px;height:1px;background:repeating-linear-gradient(90deg,#999 0 1px,transparent 1px 3px)"></div>
<div class="a" style="left:72px;top:258px;width:6px;height:14px;border:1px solid #555;border-right:none;background:#fff"></div>
<div class="a" style="left:75px;top:265px;width:2px;height:5px;background:#d02030"></div>
<div class="a" style="left:65px;top:284px;width:12px;height:1px;background:repeating-linear-gradient(90deg,#999 0 1px,transparent 1px 3px)"></div>
<div class="a" style="left:72px;top:277px;width:6px;height:14px;border:1px solid #555;border-right:none;background:#fff"></div>
<div class="a" style="left:75px;top:284px;width:2px;height:5px;background:#d02030"></div>
<div class="a" style="left:65px;top:303px;width:12px;height:1px;background:repeating-linear-gradient(90deg,#999 0 1px,transparent 1px 3px)"></div>
<div class="a" style="left:72px;top:296px;width:6px;height:14px;border:1px solid #555;border-right:none;background:#fff"></div>
<div class="a" style="left:75px;top:303px;width:2px;height:5px;background:#d02030"></div>
<div class="a" style="left:65px;top:322px;width:12px;height:1px;background:repeating-linear-gradient(90deg,#999 0 1px,transparent 1px 3px)"></div>
<div class="a" style="left:72px;top:315px;width:6px;height:14px;border:1px solid #555;border-right:none;background:#fff"></div>
<div class="a" style="left:75px;top:322px;width:2px;height:5px;background:#d02030"></div>
<div class="a" style="left:65px;top:341px;width:12px;height:1px;background:repeating-linear-gradient(90deg,#999 0 1px,transparent 1px 3px)"></div>
<div class="a" style="left:72px;top:334px;width:6px;height:14px;border:1px solid #555;border-right:none;background:#fff"></div>
<div class="a" style="left:75px;top:341px;width:2px;height:5px;background:#d02030"></div>
<div class="a" style="left:35px;top:900px;width:375px;height:15px;background:#f0f0f0"></div>
<div class="a" style="left:52px;top:901px;width:208px;height:13px;background:#c8c8c8"></div>
<svg class="a" style="left:40px;top:903px;" width="8" height="9" viewBox="0 0 8 9"><path d="M6 1L2 4.5 6 8" stroke="#555" stroke-width="1.5" fill="none"/></svg>
<svg class="a" style="left:397px;top:903px;" width="8" height="9" viewBox="0 0 8 9"><path d="M2 1l4 3.5L2 8" stroke="#555" stroke-width="1.5" fill="none"/></svg>
<div class="a" style="left:35px;top:917px;width:375px;height:5px;background:#d8d8d8"></div>
<svg class="a" style="left:43px;top:928px;" width="6" height="10" viewBox="0 0 6 10"><path d="M1 1l4 4-4 4z" fill="#1a5a78"/></svg>
<div class="t" style="left:57px;top:925.0px;font-size:12.5px;line-height:16px;color:#2a7ea6;font-weight:normal;">Preview</div>
<div class="a" style="left:35px;top:943px;width:375px;height:2px;background:#dcdcdc"></div>
<svg class="a" style="left:43px;top:951px;" width="6" height="10" viewBox="0 0 6 10"><path d="M1 1l4 4-4 4z" fill="#1a5a78"/></svg>
<div class="t" style="left:57px;top:948.0px;font-size:12.5px;line-height:16px;color:#2a7ea6;font-weight:normal;">Dependencies</div>
<div class="a" style="left:35px;top:966px;width:375px;height:2px;background:#dcdcdc"></div>
<div class="a" style="left:420px;top:136px;width:1413px;height:838px;background:#fff;border-left:1px solid #a8a8a8"></div>
<div class="a" style="left:420px;top:136px;width:1413px;height:1px;background:#dcdcdc"></div>
<div class="a" style="left:420px;top:160px;width:1413px;height:2px;background:#1f5874"></div>
<div class="a" style="left:421px;top:162px;width:1412px;height:812px;background:linear-gradient(180deg,#b3b5b7 0%,#c6c7c9 30%,#d8d9da 55%,#e3e4e5 80%,#e6e6e7 100%)"></div>
<div class="a" style="left:0px;top:974px;width:1833px;height:1px;background:#cdcdcd"></div>
<svg class="a" style="left:1240px;top:380px;" width="460" height="440" viewBox="0 0 460 440"><path d="M34 116V425M34 116L248 84M34 345L363 287M127 176V198L356 164V148M250 317V378M390 168V192" stroke="#b07a50" stroke-width="1" fill="none"/><circle cx="34" cy="345" r="2" fill="none" stroke="#b07a50"/><rect x="247" y="378" width="6" height="12" fill="none" stroke="#b07a50" stroke-width=".8"/><rect x="387" y="192" width="6" height="11" fill="none" stroke="#b07a50" stroke-width=".8"/><text transform="translate(271,173) rotate(-8)" text-anchor="middle" font-size="10" fill="#b07a50" font-family="Liberation Mono">156,0 ±0,50</text><text transform="translate(33,392) rotate(-90)" text-anchor="middle" font-size="9.5" fill="#b07a50" font-family="Liberation Mono">146,0 ±0,50</text><text x="317" y="331" font-size="13.5" fill="#a88a70" font-family="Liberation Sans" letter-spacing="-.3">rǒ mag ỉyn</text><text transform="translate(335,291) rotate(-8)" font-size="8" fill="#b07a50" font-family="Liberation Mono">ʃ56,0</text><g transform="translate(69,121) skewY(36)"><rect x="0" y="0" width="28.8" height="10" fill="#e6e2dc" fill-opacity=".5" stroke="#b07a50" stroke-width=".8"/><path d="M7.2 0V10" stroke="#b07a50" stroke-width=".7"/><path d="M14.4 0V10" stroke="#b07a50" stroke-width=".7"/><path d="M21.6 0V10" stroke="#b07a50" stroke-width=".7"/><path d="M3.6 2v6M1.6 5h4" stroke="#b07a50" stroke-width=".8"/></g><text transform="translate(81,128) rotate(36)" font-size="7.5" fill="#b07a50" font-family="Liberation Sans">ø8,0</text><g transform="translate(400,143) skewY(34)"><rect x="0" y="0" width="34.0" height="10" fill="#e6e2dc" fill-opacity=".5" stroke="#b07a50" stroke-width=".8"/><path d="M6.8 0V10" stroke="#b07a50" stroke-width=".7"/><path d="M13.6 0V10" stroke="#b07a50" stroke-width=".7"/><path d="M20.4 0V10" stroke="#b07a50" stroke-width=".7"/><path d="M27.2 0V10" stroke="#b07a50" stroke-width=".7"/><path d="M3.4 2v6M1.4 5h4" stroke="#b07a50" stroke-width=".8"/></g><text transform="translate(412,147) rotate(34)" font-size="7.5" fill="#b07a50" font-family="Liberation Sans">ø8,0</text><g transform="translate(349,112) skewY(34)"><rect x="0" y="0" width="28" height="10" fill="#e6e2dc" fill-opacity=".5" stroke="#b07a50" stroke-width=".8"/><path d="M7 0V10" stroke="#b07a50" stroke-width=".7"/><path d="M14 0V10" stroke="#b07a50" stroke-width=".7"/><path d="M21 0V10" stroke="#b07a50" stroke-width=".7"/><path d="M3.5 2v6M1.5 5h4" stroke="#b07a50" stroke-width=".8"/></g><path d="M98 150L122 165M372 125L402 145" stroke="#b07a50" stroke-width=".8"/><defs><linearGradient id="pg1" x1="0" y1="0" x2="0" y2="1"><stop offset="0" stop-color="#2aa8f4"/><stop offset=".6" stop-color="#1f98ec"/><stop offset="1" stop-color="#1476d0"/></linearGradient><linearGradient id="pg2" x1="0" y1="0" x2="0" y2="1"><stop offset="0" stop-color="#0e62b8"/><stop offset=".45" stop-color="#2a9cf0"/><stop offset="1" stop-color="#38b4fa"/></linearGradient></defs><path d="M305.0 34.0 L336.0 20.0 Q366.0 30.0 365.0 83.0 Q362.0 118.0 348.0 122.0 L312.0 116.0 Z" fill="url(#pg1)" stroke="#0a3468" stroke-width="1"/><path d="M309.0 100.0 L365.0 96.0" stroke="#0a3468" stroke-width=".6" opacity=".7"/><path d="M297.0 37.0 L307.0 34.0 Q320.0 75.0 312.0 116.0 L302.0 117.0 Q308.0 75.0 297.0 37.0 Z" fill="#1e96e8" stroke="#0a3468" stroke-width=".9"/><path d="M301.0 36.0 Q313.0 75.0 306.0 117.0M304.0 35.0 Q317.0 75.0 309.0 116.0" stroke="#0a3468" stroke-width=".8" fill="none"/><path d="M259.0 30.5 L298.0 37.0 Q310.0 75.0 303.0 117.0 L273.0 133.0 Z" fill="url(#pg1)" stroke="#0a3468" stroke-width="1"/><path d="M287.0 96.0 L306.0 90.0" stroke="#0a3468" stroke-width=".6" opacity=".7"/><ellipse cx="266" cy="82" rx="21.5" ry="51.5" transform="rotate(-8 266 82)" fill="#1a8ee2" stroke="#0a3468" stroke-width="1.6"/><ellipse cx="266" cy="82" rx="18" ry="46.5" transform="rotate(-8 266 82)" fill="url(#pg2)" stroke="#0a3468" stroke-width=".8"/><path d="M248.0 68.0 L280.0 66.0M248.0 86.0 L285.0 85.0" stroke="#0a3468" stroke-width=".5" opacity=".6"/><ellipse cx="266" cy="82" rx="7.5" ry="17" fill="#2a9cf0" stroke="#0a3468" stroke-width="1.1"/><ellipse cx="266" cy="83" rx="4.5" ry="12" fill="#5ac8ff" stroke="#0a3468" stroke-width=".8"/><ellipse cx="267" cy="84" rx="2.5" ry="7" fill="#1a88e0"/><path d="M286.0 65.0 L318.0 87.0 L265.0 83.0" stroke="#e8eef4" stroke-width="1" fill="none" opacity=".85"/><path d="M318.0 87.0 L363.0 112.0" stroke="#b07a50" stroke-width="1"/><ellipse cx="128" cy="161" rx="6.5" ry="17" fill="#e8909c" stroke="#a85060" stroke-width=".8"/><path d="M109.0 153.0 L126.0 150.0 L127.0 172.0 L110.0 173.0 Z" fill="#f2aab2" stroke="#a85060" stroke-width=".7"/><ellipse cx="109.5" cy="163" rx="4.5" ry="10" fill="#f8c8d0" stroke="#a85060" stroke-width=".9"/><ellipse cx="109.5" cy="163" rx="2.7" ry="6.4" fill="#e8a0aa" stroke="#a85060" stroke-width=".6"/><ellipse cx="361" cy="120" rx="7" ry="15" fill="#e8909c" stroke="#a85060" stroke-width=".8"/><path d="M363.0 110.0 L380.0 107.0 Q386.0 116.0 380.0 128.0 L363.0 132.0 Z" fill="#f2aab2" stroke="#a85060" stroke-width=".7"/><ellipse cx="361" cy="121" rx="3" ry="6" fill="none" stroke="#a85060" stroke-width=".8"/><path d="M158 161L180 156L180 172L160 176Z" fill="#f4f020" stroke="#a0a010" stroke-width=".8"/><path d="M176 154L257 141Q262 151 258 161L179 176Q172 165 176 154Z" fill="#f4f020" stroke="#a0a010" stroke-width=".8"/><path d="M256 145L272 142Q276 148 273 155L258 158Z" fill="#f4f020" stroke="#a0a010" stroke-width=".8"/><ellipse cx="159" cy="168" rx="3.5" ry="7.5" fill="#e8e020" stroke="#a0a010" stroke-width=".8"/><path d="M43.0 256.0 L74.0 206.0 L78.0 209.0 L50.0 259.0 Z" fill="#c97a08" stroke="#5a3206" stroke-width="0.7"/><path d="M50.0 259.0 L78.0 209.0 L76.0 258.0 Z" fill="#f5a318" stroke="#5a3206" stroke-width="0.7"/><path d="M73.0 197.0 L91.0 194.0 L92.0 245.0 L74.0 248.0 Z" fill="#f5a318" stroke="#5a3206" stroke-width="0.7"/><path d="M91.0 194.0 L95.0 198.0 L96.0 243.0 L92.0 245.0 Z" fill="#c97a08" stroke="#5a3206" stroke-width="0.7"/><ellipse cx="82" cy="187" rx="13" ry="15.5" fill="#c97a08" stroke="#5a3206" stroke-width=".7"/><ellipse cx="79" cy="188" rx="13" ry="15.5" fill="#f5a318" stroke="#5a3206" stroke-width=".7"/><ellipse cx="73" cy="190.5" rx="5.5" ry="10.5" fill="#d88a10" stroke="#5a3206" stroke-width=".7"/><path d="M69.0 195.0 Q73.0 203.0 77.0 195.0" fill="#ffc040"/><path d="M72.0 245.0 L92.0 241.0 L100.0 248.0 L80.0 252.0 Z" fill="#ffc040" stroke="#5a3206" stroke-width="0.7"/><path d="M80.0 252.0 L100.0 248.0 L100.0 262.0 L80.0 266.0 Z" fill="#f5a318" stroke="#5a3206" stroke-width="0.7"/><path d="M72.0 245.0 L80.0 252.0 L80.0 266.0 L72.0 260.0 Z" fill="#c97a08" stroke="#5a3206" stroke-width="0.7"/><ellipse cx="88" cy="247" rx="3" ry="1.5" fill="none" stroke="#5a3206" stroke-width=".6"/><path d="M349.0 219.0 L364.0 216.0 L392.0 234.0 L377.0 238.0 Z" fill="#ffc040" stroke="#5a3206" stroke-width="0.7"/><path d="M377.0 238.0 L392.0 234.0 L392.0 247.0 L377.0 250.0 Z" fill="#f5a318" stroke="#5a3206" stroke-width="0.7"/><path d="M349.0 219.0 L377.0 238.0 L377.0 250.0 L349.0 231.0 Z" fill="#c97a08" stroke="#5a3206" stroke-width="0.7"/><path d="M352.0 223.0 L374.0 237.0" stroke="#5a3206" stroke-width="2" stroke-dasharray="1.2 1.3"/><path d="M358.0 190.0 L378.0 186.0 L380.0 237.0 L360.0 240.0 Z" fill="#f5a318" stroke="#5a3206" stroke-width="0.7"/><path d="M377.0 197.0 L405.0 236.0 L380.0 241.0 Z" fill="#f5a318" stroke="#5a3206" stroke-width="0.7"/><path d="M377.0 197.0 L381.0 195.0 L407.0 234.0 L405.0 236.0 Z" fill="#c97a08" stroke="#5a3206" stroke-width="0.7"/><ellipse cx="372" cy="176" rx="14" ry="17.5" fill="#c97a08" stroke="#5a3206" stroke-width=".7"/><ellipse cx="368" cy="176.5" rx="14" ry="17.5" fill="#f5a318" stroke="#5a3206" stroke-width=".7"/><ellipse cx="363" cy="176" rx="6.5" ry="10.5" fill="#d88a10" stroke="#5a3206" stroke-width=".7"/><path d="M359.0 181.0 Q363.0 188.0 368.0 181.0" fill="#ffc040"/><ellipse cx="382" cy="232" rx="3" ry="1.5" fill="none" stroke="#5a3206" stroke-width=".6"/><path d="M16 289L57 277L101 306L101 317L60 330L16 300Z" fill="#3a3a3a" stroke="#111" stroke-width=".8"/><path d="M16 289L57 277L101 306L60 318Z" fill="#4e4e4e" stroke="#222" stroke-width=".8"/><path d="M60 318L101 306L101 317L60 330Z" fill="#5c5c5c" stroke="#222" stroke-width=".6"/><ellipse cx="30" cy="288" rx="4" ry="2" fill="none" stroke="#222" stroke-width=".7"/><ellipse cx="62" cy="306" rx="4" ry="2" fill="none" stroke="#222" stroke-width=".7"/><rect x="54" y="275" width="4" height="9" fill="#666" stroke="#111" stroke-width=".6"/><rect x="76" y="293" width="4" height="9" fill="#666" stroke="#111" stroke-width=".6"/><path d="M110 310L150 296L202 317L202 340L160 344L140 338L110 322Z" fill="#c8ccd4" stroke="#c87028" stroke-width="1"/><path d="M110 310L150 296L202 317L160 332Z" fill="#e0923a" stroke="#b8641a" stroke-width=".8"/><path d="M120 304l5 -2 -1 4z" fill="#f8d8a8"/><path d="M127 309l5 -2 -1 4z" fill="#f8d8a8"/><path d="M134 314l5 -2 -1 4z" fill="#f8d8a8"/><path d="M141 319l5 -2 -1 4z" fill="#f8d8a8"/><path d="M148 324l5 -2 -1 4z" fill="#f8d8a8"/><path d="M155 307l5 -2 -1 4z" fill="#f8d8a8"/><path d="M162 312l5 -2 -1 4z" fill="#f8d8a8"/><path d="M169 317l5 -2 -1 4z" fill="#f8d8a8"/><path d="M126 322l5 -2 -1 4z" fill="#f8d8a8"/><path d="M133 305l5 -2 -1 4z" fill="#f8d8a8"/><path d="M140 310l5 -2 -1 4z" fill="#f8d8a8"/><path d="M147 315l5 -2 -1 4z" fill="#f8d8a8"/><path d="M154 320l5 -2 -1 4z" fill="#f8d8a8"/><path d="M161 325l5 -2 -1 4z" fill="#f8d8a8"/><path d="M151 286L257 270Q270 268 280 275L310 295L202 317Z" fill="#dfe6f2" stroke="#556" stroke-width=".7"/><path d="M202 317L310 295L310 321L202 342Z" fill="#d6deea" stroke="#889" stroke-width=".6"/><path d="M160 344L310 321" stroke="#e07a28" stroke-width="1.5"/><path d="M151 286L151 300L202 317" fill="#a8b0c0" stroke="#667" stroke-width=".6"/><ellipse cx="206" cy="298" rx="7" ry="3" fill="none" stroke="#556"/><ellipse cx="263" cy="275" rx="6" ry="3" fill="none" stroke="#556"/><ellipse cx="297" cy="296" rx="6" ry="3" fill="none" stroke="#556"/><rect x="248" y="270" width="5" height="11" fill="#eef" stroke="#556" stroke-width=".6"/><rect x="270" y="287" width="5" height="11" fill="#eef" stroke="#556" stroke-width=".6"/><path d="M204 324L207 360L205 370L202 360Z" fill="#d01828"/><text x="209" y="383" font-size="12" fill="#c82838" font-family="Liberation Sans">XC</text><text x="181" y="303" font-size="12" fill="#3a5ae8" font-family="Liberation Sans">ZC</text><text x="156" y="342" font-size="12" fill="#5ab85a" font-family="Liberation Sans">YC</text><path d="M171 326L202 320" stroke="#7ad87a" stroke-width="2"/><path d="M187 308L200 317" stroke="#3a7ae8" stroke-width="2"/></svg>
<svg class="a" style="left:515px;top:900px;" width="16" height="46" viewBox="0 0 16 46"><path d="M6.5 0h3v17h3.5L8 33 3 17h3.5z" fill="#b01c28"/><path d="M4 38l8 7M12 38l-8 7" stroke="#c82838" stroke-width="1"/></svg>
<div class="a" style="left:77px;top:130px;width:1060px;height:694px;background:#f0f0f0;border:1px solid #7a7a7a;box-shadow:0 2px 12px rgba(0,0,0,.35)"></div>
<div class="a" style="left:78px;top:131px;width:1058px;height:46px;background:#fff"></div>
<svg class="a" style="left:86px;top:139px;" width="15" height="12" viewBox="0 0 15 12"><rect x=".5" y=".5" width="14" height="11" fill="#e8eef2" stroke="#9aa"/><rect x="2" y="3" width="5" height="7" fill="#2a8a8a" opacity=".8"/><rect x="8" y="3" width="3" height="7" fill="#bcd"/></svg>
<div class="t" style="left:106px;top:138.0px;font-size:11.05px;line-height:14px;color:#111;font-weight:normal;">Analysis Summary (Pulley_DVM_Asm.hst, Pulley_DVM_Asm.hlm)</div>
<div class="a" style="left:1022px;top:144px;width:10px;height:1px;background:#111"></div>
<div class="a" style="left:1065px;top:140px;width:10px;height:9px;border:1px solid #111"></div>
<svg class="a" style="left:1109px;top:140px;" width="10" height="10" viewBox="0 0 10 10"><path d="M0 0l10 10M10 0L0 10" stroke="#111" stroke-width="1.1"/></svg>
<div class="t" style="left:85px;top:161.5px;font-size:11.2px;line-height:15px;color:#111;font-weight:normal;">File</div>
<div class="t" style="left:116px;top:161.5px;font-size:11.2px;line-height:15px;color:#111;font-weight:normal;">View</div>
<div class="t" style="left:153px;top:161.5px;font-size:11.2px;line-height:15px;color:#111;font-weight:normal;">Analysis</div>
<div class="t" style="left:207px;top:161.5px;font-size:11.2px;line-height:15px;color:#111;font-weight:normal;">Help</div>
<div class="a" style="left:85px;top:185px;width:22px;height:23px;background:#f0f0f0;border:1px solid;border-color:#fff #7a7a7a #7a7a7a #fff"></div>
<div class="a" style="left:86px;top:186px;width:20px;height:21px;background:#f0f0f0;border:1px solid #999"></div>
<div class="a" style="left:113px;top:185px;width:22px;height:23px;background:#f0f0f0;border:1px solid;border-color:#fff #7a7a7a #7a7a7a #fff"></div>
<div class="a" style="left:139px;top:185px;width:22px;height:23px;background:#f0f0f0;border:1px solid;border-color:#fff #7a7a7a #7a7a7a #fff"></div>
<div class="a" style="left:171px;top:185px;width:22px;height:23px;background:#f0f0f0;border:1px solid;border-color:#fff #7a7a7a #7a7a7a #fff"></div>
<div class="a" style="left:197px;top:185px;width:22px;height:23px;background:#f0f0f0;border:1px solid;border-color:#fff #7a7a7a #7a7a7a #fff"></div>
<div class="a" style="left:228px;top:185px;width:58px;height:20px;background:#f0f0f0;border:1px solid;border-color:#fff #777 #777 #fff"></div>
<div class="a" style="left:286px;top:185px;width:62px;height:20px;background:#f0f0f0;border:1px solid;border-color:#fff #777 #777 #fff"></div>
<div class="t" style="left:-43px;width:600px;text-align:center;top:189.5px;font-size:9.7px;line-height:13px;color:#111;font-weight:normal;">Show Min</div>
<div class="t" style="left:17px;width:600px;text-align:center;top:189.5px;font-size:9.7px;line-height:13px;color:#111;font-weight:normal;">Show Max</div>
<svg class="a" style="left:87px;top:188px;" width="18" height="18" viewBox="0 0 18 18"><path d="M1 17c3-1 5-15 8-16 3 1 5 15 8 16z" fill="#10a010"/><path d="M1 17l3-5 2 5zM17 17l-3-5-2 5z" fill="#e01010"/></svg>
<svg class="a" style="left:115px;top:190px;" width="18" height="16" viewBox="0 0 18 16"><path d="M1 16c3-1 5-13 8-14 3 1 5 13 8 14z" fill="#10a010"/><path d="M1 16l3-4 2 4zM17 16l-3-4-2 4z" fill="#e01010"/></svg>
<svg class="a" style="left:141px;top:188px;" width="18" height="18" viewBox="0 0 18 18"><rect x="2" y="2" width="14" height="3.5" fill="#1010e0"/><rect x="2" y="7" width="11" height="3.5" fill="#1010e0"/><rect x="2" y="12" width="6" height="3.5" fill="#1010e0"/></svg>
<svg class="a" style="left:172px;top:188px;" width="20" height="18" viewBox="0 0 20 18"><path d="M1 9l8-8v5h10v6H9v5z" fill="#0a18d8"/><rect x="11" y="8" width="7" height="3" fill="#28d8f0"/></svg>
<svg class="a" style="left:198px;top:188px;" width="20" height="18" viewBox="0 0 20 18"><path d="M19 9l-8-8v5H1v6h10v5z" fill="#0a18d8"/><rect x="2" y="8" width="7" height="3" fill="#28d8f0"/></svg>
<div class="t" style="left:829px;top:188.5px;font-size:10.2px;line-height:13px;color:#111;font-weight:normal;">Search:</div>
<div class="a" style="left:867px;top:186px;width:110px;height:20px;background:#fff;border:1px solid;border-color:#7a7a7a #e8e8e8 #e8e8e8 #7a7a7a"></div>
<div class="t" style="left:988px;top:188.5px;font-size:10.2px;line-height:13px;color:#111;font-weight:normal;">Filter:</div>
<div class="a" style="left:1019px;top:186px;width:110px;height:20px;background:#fff;border:1px solid;border-color:#7a7a7a #e8e8e8 #e8e8e8 #7a7a7a"></div>
<div class="t" style="left:84px;top:217.5px;font-size:11.2px;line-height:15px;color:#111;font-weight:normal;">Monte</div>
<div class="a" style="left:84px;top:236px;width:1045px;height:276px;background:#fff;border:1px solid;border-color:#777 #e0e0e0 #e0e0e0 #777"></div>
<div class="a" style="left:85px;top:237px;width:1043px;height:16px;background:#f0f0f0;border-bottom:2px solid #888"></div>
<div class="a" style="left:85px;top:252px;width:1043px;height:1px;background:#777"></div>
<div class="t" style="left:84px;top:523.5px;font-size:11.2px;line-height:15px;color:#111;font-weight:normal;">Contributors</div>
<div class="a" style="left:84px;top:543px;width:1045px;height:275px;background:#fff;border:1px solid;border-color:#777 #e0e0e0 #e0e0e0 #777"></div>
<div class="a" style="left:85px;top:544px;width:1043px;height:16px;background:#f0f0f0;border-bottom:2px solid #888"></div>
<div class="a" style="left:85px;top:362px;width:22px;height:22px;background:#ececec"></div>
<div class="a" style="left:106px;top:203px;width:976px;height:698px;background:#f0f0f0;border:1px solid #6a6a6a;box-shadow:0 2px 14px rgba(0,0,0,.4)"></div>
<div class="a" style="left:107px;top:204px;width:974px;height:47px;background:#fff"></div>
<svg class="a" style="left:115px;top:211px;" width="15" height="12" viewBox="0 0 15 12"><rect x=".5" y=".5" width="14" height="11" fill="#e8eef2" stroke="#9aa"/><rect x="2" y="3" width="5" height="7" fill="#2a8a8a" opacity=".8"/><rect x="8" y="3" width="3" height="7" fill="#bcd"/></svg>
<div class="t" style="left:135px;top:211.0px;font-size:11.08px;line-height:14px;color:#111;font-weight:normal;">Monte Carlo Analysis Results (Pulley_DVM_Asm.hst, Pulley_DVM_Asm.hlm)</div>
<div class="a" style="left:967px;top:217px;width:10px;height:1px;background:#111"></div>
<div class="a" style="left:1011px;top:212px;width:10px;height:10px;border:1px solid #111"></div>
<svg class="a" style="left:1055px;top:212px;" width="10" height="10" viewBox="0 0 10 10"><path d="M0 0l10 10M10 0L0 10" stroke="#111" stroke-width="1.1"/></svg>
<div class="t" style="left:114px;top:234.5px;font-size:11.2px;line-height:15px;color:#111;font-weight:normal;">File</div>
<div class="t" style="left:144px;top:234.5px;font-size:11.2px;line-height:15px;color:#111;font-weight:normal;">View</div>
<div class="t" style="left:182px;top:234.5px;font-size:11.2px;line-height:15px;color:#111;font-weight:normal;">Analysis</div>
<div class="t" style="left:235px;top:234.5px;font-size:11.2px;line-height:15px;color:#111;font-weight:normal;">Help</div>
<div class="a" style="left:107px;top:253px;width:22px;height:23px;background:#f0f0f0;border:1px solid;border-color:#fff #8a8a8a #8a8a8a #fff"></div>
<div class="a" style="left:133px;top:253px;width:22px;height:23px;background:#f0f0f0;border:1px solid;border-color:#fff #8a8a8a #8a8a8a #fff"></div>
<div class="a" style="left:164px;top:253px;width:22px;height:23px;background:#f0f0f0;border:1px solid;border-color:#fff #8a8a8a #8a8a8a #fff"></div>
<div class="a" style="left:190px;top:253px;width:22px;height:23px;background:#f0f0f0;border:1px solid;border-color:#fff #8a8a8a #8a8a8a #fff"></div>
<div class="a" style="left:222px;top:253px;width:22px;height:23px;background:#f0f0f0;border:1px solid;border-color:#fff #8a8a8a #8a8a8a #fff"></div>
<div class="a" style="left:247px;top:253px;width:22px;height:23px;background:#f0f0f0;border:1px solid;border-color:#fff #8a8a8a #8a8a8a #fff"></div>
<svg class="a" style="left:109px;top:256px;" width="18" height="18" viewBox="0 0 18 18"><path d="M1 17c3-1 5-15 8-16 3 1 5 15 8 16z" fill="#10a010"/><path d="M1 17l3-5 2 5zM17 17l-3-5-2 5z" fill="#e01010"/></svg>
<svg class="a" style="left:136px;top:256px;" width="18" height="18" viewBox="0 0 18 18"><rect x="2" y="3" width="14" height="3.5" fill="#1010e0"/><rect x="2" y="8.5" width="12" height="3.5" fill="#1010e0"/><rect x="2" y="14" width="7" height="3.5" fill="#1010e0"/></svg>
<svg class="a" style="left:165px;top:256px;" width="20" height="18" viewBox="0 0 20 18"><path d="M1 9l8-8v5h10v6H9v5z" fill="#0a18d8"/><rect x="11" y="8" width="7" height="3" fill="#28d8f0"/></svg>
<svg class="a" style="left:191px;top:256px;" width="20" height="18" viewBox="0 0 20 18"><path d="M19 9l-8-8v5H1v6h10v5z" fill="#0a18d8"/><rect x="2" y="8" width="7" height="3" fill="#28d8f0"/></svg>
<svg class="a" style="left:223px;top:254px;" width="21" height="21" viewBox="0 0 21 21"><path d="M2 2h16M2 0v4M18 0v4" stroke="#111" stroke-width="1"/><rect x="3" y="6" width="8" height="8" fill="#2cc82c" stroke="#107010" stroke-width=".6"/><rect x="10" y="5" width="8" height="9" fill="#3a90c8" stroke="#1a4a70" stroke-width=".6"/><rect x="1" y="15" width="19" height="4" fill="#e8c050" stroke="#a08020" stroke-width=".6"/></svg>
<svg class="a" style="left:248px;top:254px;" width="21" height="21" viewBox="0 0 21 21"><text x="10.5" y="10" text-anchor="middle" font-size="12" font-weight="bold" fill="#fff" stroke="#111" stroke-width=".8" font-family="Liberation Sans" letter-spacing="-.5">±1</text><path d="M1 9v10M19 9v10M2 13h16" stroke="#111"/><rect x="1" y="15" width="19" height="4" fill="#28c0f0" stroke="#0a70a0" stroke-width=".6"/></svg>
<div class="a" style="left:279px;top:257px;width:58px;height:21px;background:#f0f0f0;border:1px solid;border-color:#fff #777 #777 #fff"></div>
<div class="a" style="left:337px;top:257px;width:63px;height:21px;background:#f0f0f0;border:1px solid;border-color:#fff #777 #777 #fff"></div>
<div class="t" style="left:8px;width:600px;text-align:center;top:260.5px;font-size:9.7px;line-height:13px;color:#111;font-weight:normal;">Show Min</div>
<div class="t" style="left:68.5px;width:600px;text-align:center;top:260.5px;font-size:9.7px;line-height:13px;color:#111;font-weight:normal;">Show Max</div>
<div class="t" style="left:409px;top:262.0px;font-size:10.2px;line-height:13px;color:#111;font-weight:normal;">Measure:</div>
<div class="a" style="left:454px;top:259px;width:609px;height:18px;background:#fff;border:1px solid;border-color:#7a7a7a #eee #eee #7a7a7a;border-width:2px 1px 1px 2px"></div>
<div class="t" style="left:458px;top:262.0px;font-size:10.1px;line-height:13px;color:#111;font-weight:normal;">8 Dim_A_to_Pulley_Center</div>
<div class="a" style="left:1046px;top:261px;width:16px;height:15px;background:#f0f0f0;border:1px solid;border-color:#fff #7a7a7a #7a7a7a #fff"></div>
<svg class="a" style="left:1049px;top:266px;" width="9" height="5" viewBox="0 0 9 5"><path d="M0 0h9L4.5 5z" fill="#111"/></svg>
<div class="t" style="left:406px;top:287.5px;font-size:10.4px;line-height:14px;color:#111;font-weight:normal;">Show Contributors:</div>
<div class="a" style="left:500px;top:285px;width:124px;height:18px;background:#fff;border:1px solid;border-color:#7a7a7a #eee #eee #7a7a7a;border-width:2px 1px 1px 2px"></div>
<div class="t" style="left:503px;top:288.0px;font-size:10.2px;line-height:13px;color:#111;font-weight:normal;">Per Tolerance</div>
<div class="a" style="left:607px;top:287px;width:16px;height:15px;background:#f0f0f0;border:1px solid;border-color:#fff #7a7a7a #7a7a7a #fff"></div>
<svg class="a" style="left:610px;top:292px;" width="9" height="5" viewBox="0 0 9 5"><path d="M0 0h9L4.5 5z" fill="#111"/></svg>
<div class="a" style="left:631px;top:283px;width:106px;height:21px;background:#f0f0f0;border:1px solid;border-color:#fff #777 #777 #fff"></div>
<div class="t" style="left:383px;width:600px;text-align:center;top:287.0px;font-size:10.1px;line-height:13px;color:#111;font-weight:normal;">Visualize Effect</div>
<div class="t" style="left:750px;top:288.0px;font-size:10.2px;line-height:13px;color:#111;font-weight:normal;">Search:</div>
<div class="a" style="left:790px;top:285px;width:111px;height:19px;background:#fff;border:1px solid;border-color:#7a7a7a #eee #eee #7a7a7a;border-width:2px 1px 1px 2px"></div>
<div class="t" style="left:921px;top:288.0px;font-size:10.2px;line-height:13px;color:#111;font-weight:normal;">Filter:</div>
<div class="a" style="left:952px;top:285px;width:111px;height:19px;background:#fff;border:1px solid;border-color:#7a7a7a #eee #eee #7a7a7a;border-width:2px 1px 1px 2px"></div>
<div class="a" style="left:107px;top:308px;width:957px;height:573px;background:#fff;border-top:1px solid #000;border-left:1px solid #111"></div>
<div class="a" style="left:1064px;top:308px;width:15px;height:573px;background:#f0f0f0"></div>
<div class="a" style="left:1064px;top:308px;width:15px;height:16px;background:#f0f0f0;border:1px solid;border-color:#fff #7a7a7a #7a7a7a #fff"></div>
<svg class="a" style="left:1068px;top:313px;" width="7" height="4" viewBox="0 0 7 4"><path d="M0 4h7L3.5 0z" fill="#111"/></svg>
<div class="a" style="left:1064px;top:324px;width:15px;height:506px;background:#f0f0f0;border:1px solid;border-color:#fff #7a7a7a #7a7a7a #fff"></div>
<div class="a" style="left:1064px;top:866px;width:15px;height:15px;background:#f0f0f0;border:1px solid;border-color:#fff #7a7a7a #7a7a7a #fff"></div>
<svg class="a" style="left:1068px;top:871px;" width="7" height="4" viewBox="0 0 7 4"><path d="M0 0h7L3.5 4z" fill="#111"/></svg>
<div class="a" style="left:107px;top:881px;width:957px;height:17px;background:#f0f0f0"></div>
<div class="a" style="left:108px;top:881px;width:15px;height:16px;background:#f0f0f0;border:1px solid;border-color:#fff #7a7a7a #7a7a7a #fff"></div>
<svg class="a" style="left:112px;top:885px;" width="5" height="8" viewBox="0 0 5 8"><path d="M5 0v8L0 4z" fill="#111"/></svg>
<div class="a" style="left:123px;top:882px;width:927px;height:15px;background:#f0f0f0;border:1px solid;border-color:#fff #7a7a7a #7a7a7a #fff"></div>
<div class="a" style="left:1050px;top:881px;width:14px;height:16px;background:#f0f0f0;border:1px solid;border-color:#fff #7a7a7a #7a7a7a #fff"></div>
<svg class="a" style="left:1054px;top:885px;" width="5" height="8" viewBox="0 0 5 8"><path d="M0 0v8l5-4z" fill="#111"/></svg>
<div class="t" style="left:110.5px;top:307.5px;font-size:11.2px;line-height:15px;color:#111;font-weight:normal;transform:scaleX(1.000);transform-origin:left;">Meas8 of 12: Dim_A_to_Pulley_Center (Pulley_DVM_Asm)--Dim Dist(Center Distance) btwn CadSurf4 and CadSurf12</div>
<div class="t" style="left:110px;top:340.0px;font-size:10.9px;line-height:14px;color:#111;font-weight:normal;transform:scaleX(0.983);transform-origin:left;">Runs</div>
<div class="t" style="left:-107px;width:600px;text-align:center;top:340.0px;font-size:10.9px;line-height:14px;color:#111;font-weight:normal;">=</div>
<div class="t" style="right:1555px;top:340.0px;font-size:10.9px;line-height:14px;color:#111;font-weight:normal;transform:scaleX(0.920);transform-origin:right;">2137</div>
<div class="t" style="left:110px;top:356.2px;font-size:10.9px;line-height:14px;color:#111;font-weight:normal;transform:scaleX(1.101);transform-origin:left;">Nominal</div>
<div class="t" style="left:-107px;width:600px;text-align:center;top:356.2px;font-size:10.9px;line-height:14px;color:#111;font-weight:normal;">=</div>
<div class="t" style="right:1555px;top:356.2px;font-size:10.9px;line-height:14px;color:#111;font-weight:normal;transform:scaleX(0.996);transform-origin:right;">54.00(mm)</div>
<div class="t" style="left:110px;top:372.5px;font-size:10.9px;line-height:14px;color:#111;font-weight:normal;transform:scaleX(1.078);transform-origin:left;">Mean</div>
<div class="t" style="left:-107px;width:600px;text-align:center;top:372.5px;font-size:10.9px;line-height:14px;color:#111;font-weight:normal;">=</div>
<div class="t" style="right:1555px;top:372.5px;font-size:10.9px;line-height:14px;color:#111;font-weight:normal;transform:scaleX(0.996);transform-origin:right;">53.98(mm)</div>
<div class="t" style="left:110px;top:388.8px;font-size:10.9px;line-height:14px;color:#111;font-weight:normal;transform:scaleX(0.784);transform-origin:left;">LSL</div>
<div class="t" style="left:-107px;width:600px;text-align:center;top:388.8px;font-size:10.9px;line-height:14px;color:#111;font-weight:normal;">=</div>
<div class="t" style="right:1555px;top:388.8px;font-size:10.9px;line-height:14px;color:#111;font-weight:normal;transform:scaleX(0.996);transform-origin:right;">53.50(mm)</div>
<div class="t" style="left:110px;top:405.0px;font-size:10.9px;line-height:14px;color:#111;font-weight:normal;transform:scaleX(0.863);transform-origin:left;">USL</div>
<div class="t" style="left:-107px;width:600px;text-align:center;top:405.0px;font-size:10.9px;line-height:14px;color:#111;font-weight:normal;">=</div>
<div class="t" style="right:1555px;top:405.0px;font-size:10.9px;line-height:14px;color:#111;font-weight:normal;transform:scaleX(0.996);transform-origin:right;">54.50(mm)</div>
<div class="t" style="left:110px;top:421.2px;font-size:10.9px;line-height:14px;color:#111;font-weight:normal;transform:scaleX(0.927);transform-origin:left;">Est.Type</div>
<div class="t" style="right:1555px;top:421.2px;font-size:10.9px;line-height:14px;color:#111;font-weight:normal;transform:scaleX(1.082);transform-origin:right;">Normal</div>
<div class="t" style="left:110px;top:437.5px;font-size:10.9px;line-height:14px;color:#111;font-weight:normal;transform:scaleX(0.967);transform-origin:left;">Est.Low</div>
<div class="t" style="left:-107px;width:600px;text-align:center;top:437.5px;font-size:10.9px;line-height:14px;color:#111;font-weight:normal;">=</div>
<div class="t" style="right:1555px;top:437.5px;font-size:10.9px;line-height:14px;color:#111;font-weight:normal;transform:scaleX(0.996);transform-origin:right;">52.90(mm)</div>
<div class="t" style="left:110px;top:453.8px;font-size:10.9px;line-height:14px;color:#111;font-weight:normal;transform:scaleX(1.005);transform-origin:left;">Est.High</div>
<div class="t" style="left:-107px;width:600px;text-align:center;top:453.8px;font-size:10.9px;line-height:14px;color:#111;font-weight:normal;">=</div>
<div class="t" style="right:1555px;top:453.8px;font-size:10.9px;line-height:14px;color:#111;font-weight:normal;transform:scaleX(0.996);transform-origin:right;">55.05(mm)</div>
<div class="t" style="left:110px;top:470.0px;font-size:10.9px;line-height:14px;color:#111;font-weight:normal;transform:scaleX(0.988);transform-origin:left;">Est.Range</div>
<div class="t" style="left:-107px;width:600px;text-align:center;top:470.0px;font-size:10.9px;line-height:14px;color:#111;font-weight:normal;">=</div>
<div class="t" style="right:1555px;top:470.0px;font-size:10.9px;line-height:14px;color:#111;font-weight:normal;transform:scaleX(1.002);transform-origin:right;">2.16(mm)</div>
<div class="t" style="left:110px;top:486.2px;font-size:10.9px;line-height:14px;color:#e02a2a;font-weight:normal;transform:scaleX(0.909);transform-origin:left;">Est.L-OUT%</div>
<div class="t" style="left:-107px;width:600px;text-align:center;top:486.2px;font-size:10.9px;line-height:14px;color:#e02a2a;font-weight:normal;">=</div>
<div class="t" style="right:1555px;top:486.2px;font-size:10.9px;line-height:14px;color:#e02a2a;font-weight:normal;transform:scaleX(0.932);transform-origin:right;">9.28%</div>
<div class="t" style="left:110px;top:502.5px;font-size:10.9px;line-height:14px;color:#e02a2a;font-weight:normal;transform:scaleX(0.924);transform-origin:left;">Est.H-OUT%</div>
<div class="t" style="left:-107px;width:600px;text-align:center;top:502.5px;font-size:10.9px;line-height:14px;color:#e02a2a;font-weight:normal;">=</div>
<div class="t" style="right:1555px;top:502.5px;font-size:10.9px;line-height:14px;color:#e02a2a;font-weight:normal;transform:scaleX(0.932);transform-origin:right;">7.24%</div>
<div class="t" style="left:110px;top:518.8px;font-size:10.9px;line-height:14px;color:#e02a2a;font-weight:normal;transform:scaleX(0.933);transform-origin:left;">Est.Tot-OUT%</div>
<div class="t" style="left:-107px;width:600px;text-align:center;top:518.8px;font-size:10.9px;line-height:14px;color:#e02a2a;font-weight:normal;">=</div>
<div class="t" style="right:1555px;top:518.8px;font-size:10.9px;line-height:14px;color:#e02a2a;font-weight:normal;transform:scaleX(0.922);transform-origin:right;">16.53%</div>
<div class="a" style="left:291px;top:339px;width:771px;height:286px;background:#fff;border:2px solid #7a7a7a;border-right-color:#d8d8d8;border-right-width:1px"></div>
<svg class="a" style="left:291px;top:339px;" width="771" height="286" viewBox="0 0 771 286"><rect x="151.30" y="235.50" width="11.45" height="1.50" fill="#ff0000" stroke="#111" stroke-width="1.3"/><rect x="185.65" y="235.50" width="11.45" height="1.50" fill="#ff0000" stroke="#111" stroke-width="1.3"/><rect x="197.10" y="235.00" width="11.45" height="2.00" fill="#ff0000" stroke="#111" stroke-width="1.3"/><rect x="208.55" y="234.00" width="11.45" height="3.00" fill="#ff0000" stroke="#111" stroke-width="1.3"/><rect x="220.00" y="227.30" width="11.45" height="9.70" fill="#ff0000" stroke="#111" stroke-width="1.3"/><rect x="231.45" y="223.50" width="11.45" height="13.50" fill="#ff0000" stroke="#111" stroke-width="1.3"/><rect x="242.90" y="211.30" width="11.45" height="25.70" fill="#ff0000" stroke="#111" stroke-width="1.3"/><rect x="254.35" y="200.70" width="11.45" height="36.30" fill="#ff0000" stroke="#111" stroke-width="1.3"/><rect x="265.80" y="202.50" width="11.45" height="34.50" fill="#ff0000" stroke="#111" stroke-width="1.3"/><rect x="277.25" y="176.70" width="11.45" height="60.30" fill="#ff0000" stroke="#111" stroke-width="1.3"/><rect x="288.70" y="187.40" width="11.45" height="49.60" fill="#ff0000" stroke="#111" stroke-width="1.3"/><rect x="300.15" y="149.20" width="11.45" height="87.80" fill="#41a012" stroke="#111" stroke-width="1.3"/><rect x="311.60" y="134.60" width="11.45" height="102.40" fill="#41a012" stroke="#111" stroke-width="1.3"/><rect x="323.05" y="112.60" width="11.45" height="124.40" fill="#41a012" stroke="#111" stroke-width="1.3"/><rect x="334.50" y="115.30" width="11.45" height="121.70" fill="#41a012" stroke="#111" stroke-width="1.3"/><rect x="345.95" y="89.10" width="11.45" height="147.90" fill="#41a012" stroke="#111" stroke-width="1.3"/><rect x="357.40" y="88.20" width="11.45" height="148.80" fill="#41a012" stroke="#111" stroke-width="1.3"/><rect x="368.85" y="63.20" width="11.45" height="173.80" fill="#41a012" stroke="#111" stroke-width="1.3"/><rect x="380.30" y="50.50" width="11.45" height="186.50" fill="#41a012" stroke="#111" stroke-width="1.3"/><rect x="391.75" y="43.20" width="11.45" height="193.80" fill="#41a012" stroke="#111" stroke-width="1.3"/><rect x="403.20" y="72.50" width="11.45" height="164.50" fill="#41a012" stroke="#111" stroke-width="1.3"/><rect x="414.65" y="76.50" width="11.45" height="160.50" fill="#41a012" stroke="#111" stroke-width="1.3"/><rect x="426.10" y="71.60" width="11.45" height="165.40" fill="#41a012" stroke="#111" stroke-width="1.3"/><rect x="437.55" y="120.40" width="11.45" height="116.60" fill="#41a012" stroke="#111" stroke-width="1.3"/><rect x="449.00" y="118.20" width="11.45" height="118.80" fill="#41a012" stroke="#111" stroke-width="1.3"/><rect x="460.45" y="143.50" width="11.45" height="93.50" fill="#41a012" stroke="#111" stroke-width="1.3"/><rect x="471.90" y="155.90" width="11.45" height="81.10" fill="#41a012" stroke="#111" stroke-width="1.3"/><rect x="483.35" y="162.50" width="11.45" height="74.50" fill="#41a012" stroke="#111" stroke-width="1.3"/><rect x="494.80" y="191.20" width="11.45" height="45.80" fill="#ff0000" stroke="#111" stroke-width="1.3"/><rect x="506.25" y="203.60" width="11.45" height="33.40" fill="#ff0000" stroke="#111" stroke-width="1.3"/><rect x="517.70" y="207.40" width="11.45" height="29.60" fill="#ff0000" stroke="#111" stroke-width="1.3"/><rect x="529.15" y="214.20" width="11.45" height="22.80" fill="#ff0000" stroke="#111" stroke-width="1.3"/><rect x="540.60" y="226.70" width="11.45" height="10.30" fill="#ff0000" stroke="#111" stroke-width="1.3"/><rect x="552.05" y="234.00" width="11.45" height="3.00" fill="#ff0000" stroke="#111" stroke-width="1.3"/><rect x="563.50" y="231.30" width="11.45" height="5.70" fill="#ff0000" stroke="#111" stroke-width="1.3"/><rect x="574.95" y="231.30" width="11.45" height="5.70" fill="#ff0000" stroke="#111" stroke-width="1.3"/><rect x="586.40" y="234.00" width="11.45" height="3.00" fill="#ff0000" stroke="#111" stroke-width="1.3"/><rect x="597.85" y="234.40" width="11.45" height="2.60" fill="#ff0000" stroke="#111" stroke-width="1.3"/><rect x="609.30" y="235.50" width="11.45" height="1.50" fill="#ff0000" stroke="#111" stroke-width="1.3"/><polyline points="139.0,236.9 143.0,236.9 147.0,236.8 151.0,236.8 155.0,236.7 159.0,236.7 163.0,236.6 167.0,236.5 171.0,236.4 175.0,236.3 179.0,236.1 183.0,235.9 187.0,235.7 191.0,235.4 195.0,235.0 199.0,234.6 203.0,234.2 207.0,233.6 211.0,233.0 215.0,232.2 219.0,231.4 223.0,230.4 227.0,229.2 231.0,227.9 235.0,226.5 239.0,224.8 243.0,222.9 247.0,220.8 251.0,218.5 255.0,215.8 259.0,213.0 263.0,209.8 267.0,206.3 271.0,202.5 275.0,198.4 279.0,194.0 283.0,189.2 287.0,184.1 291.0,178.7 295.0,173.0 299.0,166.9 303.0,160.6 307.0,154.1 311.0,147.3 315.0,140.3 319.0,133.2 323.0,126.0 327.0,118.7 331.0,111.5 335.0,104.2 339.0,97.1 343.0,90.2 347.0,83.6 351.0,77.2 355.0,71.2 359.0,65.6 363.0,60.5 367.0,55.9 371.0,51.9 375.0,48.6 379.0,45.9 383.0,43.9 387.0,42.6 391.0,42.0 395.0,42.2 399.0,43.1 403.0,44.8 407.0,47.1 411.0,50.2 415.0,53.8 419.0,58.1 423.0,63.0 427.0,68.3 431.0,74.1 435.0,80.3 439.0,86.9 443.0,93.7 447.0,100.7 451.0,107.8 455.0,115.1 459.0,122.4 463.0,129.6 467.0,136.8 471.0,143.8 475.0,150.7 479.0,157.4 483.0,163.8 487.0,170.0 491.0,175.9 495.0,181.4 499.0,186.7 503.0,191.6 507.0,196.2 511.0,200.5 515.0,204.5 519.0,208.1 523.0,211.4 527.0,214.4 531.0,217.2 535.0,219.7 539.0,221.9 543.0,223.9 547.0,225.6 551.0,227.2 555.0,228.6 559.0,229.8 563.0,230.9 567.0,231.8 571.0,232.6 575.0,233.3 579.0,233.9 583.0,234.4 587.0,234.8 591.0,235.2 595.0,235.5 599.0,235.8 603.0,236.0 607.0,236.2 611.0,236.3 615.0,236.5 619.0,236.6" fill="none" stroke="#333" stroke-width="0.9"/><path d="M27.5 17V237.0H769" fill="none" stroke="#222" stroke-width="1.3"/><path d="M23 237.0h5" stroke="#222"/><text x="22" y="240.8" text-anchor="end" font-size="10.3" fill="#222" font-family="Liberation Sans">0</text><path d="M23 205.6h5" stroke="#222"/><text x="22" y="209.4" text-anchor="end" font-size="10.3" fill="#222" font-family="Liberation Sans">25</text><path d="M23 174.1h5" stroke="#222"/><text x="22" y="177.9" text-anchor="end" font-size="10.3" fill="#222" font-family="Liberation Sans">50</text><path d="M23 142.7h5" stroke="#222"/><text x="22" y="146.5" text-anchor="end" font-size="10.3" fill="#222" font-family="Liberation Sans">75</text><path d="M23 111.3h5" stroke="#222"/><text x="22" y="115.1" text-anchor="end" font-size="10.3" fill="#222" font-family="Liberation Sans">100</text><path d="M23 79.9h5" stroke="#222"/><text x="22" y="83.7" text-anchor="end" font-size="10.3" fill="#222" font-family="Liberation Sans">125</text><path d="M23 48.4h5" stroke="#222"/><text x="22" y="52.2" text-anchor="end" font-size="10.3" fill="#222" font-family="Liberation Sans">150</text><path d="M23 17.0h5" stroke="#222"/><text x="22" y="20.8" text-anchor="end" font-size="10.3" fill="#222" font-family="Liberation Sans">175</text><path d="M27.0 237.0v5" stroke="#222"/><text x="24.0" y="253" text-anchor="middle" font-size="10.3" fill="#222" font-family="Liberation Sans">52.00</text><path d="M100.9 237.0v5" stroke="#222"/><text x="100.9" y="253" text-anchor="middle" font-size="10.3" fill="#222" font-family="Liberation Sans">52.40</text><path d="M174.8 237.0v5" stroke="#222"/><text x="174.8" y="253" text-anchor="middle" font-size="10.3" fill="#222" font-family="Liberation Sans">52.80</text><path d="M248.6 237.0v5" stroke="#222"/><text x="248.6" y="253" text-anchor="middle" font-size="10.3" fill="#222" font-family="Liberation Sans">53.20</text><path d="M322.5 237.0v5" stroke="#222"/><text x="322.5" y="253" text-anchor="middle" font-size="10.3" fill="#222" font-family="Liberation Sans">53.60</text><path d="M396.4 237.0v5" stroke="#222"/><text x="396.4" y="253" text-anchor="middle" font-size="10.3" fill="#222" font-family="Liberation Sans">54.00</text><path d="M470.3 237.0v5" stroke="#222"/><text x="470.3" y="253" text-anchor="middle" font-size="10.3" fill="#222" font-family="Liberation Sans">54.40</text><path d="M544.2 237.0v5" stroke="#222"/><text x="544.2" y="253" text-anchor="middle" font-size="10.3" fill="#222" font-family="Liberation Sans">54.80</text><path d="M618.0 237.0v5" stroke="#222"/><text x="618.0" y="253" text-anchor="middle" font-size="10.3" fill="#222" font-family="Liberation Sans">55.20</text><path d="M691.9 237.0v5" stroke="#222"/><text x="691.9" y="253" text-anchor="middle" font-size="10.3" fill="#222" font-family="Liberation Sans">55.60</text><path d="M304.5 16V237.0" stroke="#222" stroke-width="1.1"/><path d="M489.2 16V237.0" stroke="#222" stroke-width="1.1"/><path d="M392.7 16V257" stroke="#222" stroke-width="1.1"/><path d="M193.2 237.0V258" stroke="#222" stroke-width="1.1"/><path d="M590.3 237.0V258" stroke="#222" stroke-width="1.1"/><text x="305.0" y="11.8" text-anchor="middle" font-size="10" fill="#222" font-family="Liberation Sans">LSL</text><text x="486.0" y="11.8" text-anchor="middle" font-size="10" fill="#222" font-family="Liberation Sans">USL</text><text x="192.0" y="265.8" text-anchor="middle" font-size="10.5" fill="#222" font-family="Liberation Sans">Est. Low</text><text x="192.0" y="279.8" text-anchor="middle" font-size="10.5" fill="#222" font-family="Liberation Sans">52.90(mm)</text><text x="390.0" y="265.8" text-anchor="middle" font-size="10.5" fill="#222" font-family="Liberation Sans">Mean</text><text x="391.0" y="279.8" text-anchor="middle" font-size="10.5" fill="#222" font-family="Liberation Sans">53.98(mm)</text><text x="589.0" y="265.8" text-anchor="middle" font-size="10.5" fill="#222" font-family="Liberation Sans">Est. High</text><text x="589.0" y="279.8" text-anchor="middle" font-size="10.5" fill="#222" font-family="Liberation Sans">55.05(mm)</text></svg>
<div class="t" style="left:110.5px;top:673.5px;font-size:11.2px;line-height:15px;color:#111;font-weight:normal;transform:scaleX(1.023);transform-origin:left;">Meas8 of 12: Dim_A_to_Pulley_Center - Dim Dist(Center Distance) btwn CadSurf4 and CadSurf12</div>
<div class="t" style="left:110.5px;top:689.5px;font-size:11.2px;line-height:15px;color:#111;font-weight:normal;">--</div>
<div class="a" style="left:107px;top:722px;width:774px;height:17px;background:#a4a4a4;border-top:2px solid #333;border-bottom:2px solid #333"></div>
<div class="t" style="left:110.5px;top:706.0px;font-size:11.2px;line-height:15px;color:#222;font-weight:normal;transform:scaleX(1.015);transform-origin:left;">Index</div>
<div class="t" style="left:169.5px;top:706.0px;font-size:11.2px;line-height:15px;color:#222;font-weight:normal;transform:scaleX(1.083);transform-origin:left;">Contributor</div>
<div class="t" style="left:351.5px;top:706.0px;font-size:11.2px;line-height:15px;color:#222;font-weight:normal;transform:scaleX(1.071);transform-origin:left;">Part</div>
<div class="t" style="right:1287px;top:706.0px;font-size:11.2px;line-height:15px;color:#222;font-weight:normal;transform:scaleX(0.948);transform-origin:right;">Range</div>
<div class="t" style="right:1221px;top:706.0px;font-size:11.2px;line-height:15px;color:#222;font-weight:normal;transform:scaleX(1.013);transform-origin:right;">GeoFactor</div>
<div class="t" style="right:1150px;top:706.0px;font-size:11.2px;line-height:15px;color:#222;font-weight:normal;transform:scaleX(0.993);transform-origin:right;">6-Sigma</div>
<div class="t" style="right:1063px;top:706.0px;font-size:11.2px;line-height:15px;color:#222;font-weight:normal;transform:scaleX(1.066);transform-origin:right;">Contribution %</div>
<div class="t" style="left:789px;top:706px;width:92px;overflow:hidden;font-size:11.2px;line-height:15px;color:#222;-webkit-text-stroke:0.25px #222"><span style="display:inline-block;transform:scaleX(1.03);transform-origin:left">Contribution Graph</span></div>
<div class="t" style="left:110.5px;top:722.5px;font-size:11.2px;line-height:15px;color:#111;font-weight:normal;">1</div>
<div class="t" style="left:169.5px;top:722.5px;font-size:11.2px;line-height:15px;color:#111;font-weight:normal;transform:scaleX(1.033);transform-origin:left;">Dim_Hanger_Primary</div>
<div class="t" style="left:351.5px;top:722.5px;font-size:11.2px;line-height:15px;color:#111;font-weight:normal;transform:scaleX(0.833);transform-origin:left;">BASE</div>
<div class="t" style="right:1287px;top:722.5px;font-size:11.2px;line-height:15px;color:#111;font-weight:normal;transform:scaleX(1.029);transform-origin:right;">1.00(mm)</div>
<div class="t" style="right:1221px;top:722.5px;font-size:11.2px;line-height:15px;color:#111;font-weight:normal;transform:scaleX(1.051);transform-origin:right;">1.00</div>
<div class="t" style="right:1150px;top:722.5px;font-size:11.2px;line-height:15px;color:#111;font-weight:normal;transform:scaleX(1.029);transform-origin:right;">1.00(mm)</div>
<div class="t" style="right:1063px;top:722.5px;font-size:11.2px;line-height:15px;color:#111;font-weight:normal;transform:scaleX(1.027);transform-origin:right;">21.75%</div>
<div class="a" style="left:789px;top:723px;width:92px;height:14px;background:#0000ee;border:1px solid #111"></div>
<div class="t" style="left:110.5px;top:738.7px;font-size:11.2px;line-height:15px;color:#111;font-weight:normal;">2</div>
<div class="t" style="left:169.5px;top:738.7px;font-size:11.2px;line-height:15px;color:#111;font-weight:normal;transform:scaleX(1.008);transform-origin:left;">Dim_Hanger_Thickness</div>
<div class="t" style="left:351.5px;top:738.7px;font-size:11.2px;line-height:15px;color:#111;font-weight:normal;transform:scaleX(0.866);transform-origin:left;">HANGER</div>
<div class="t" style="right:1287px;top:738.7px;font-size:11.2px;line-height:15px;color:#111;font-weight:normal;transform:scaleX(1.029);transform-origin:right;">1.00(mm)</div>
<div class="t" style="right:1221px;top:738.7px;font-size:11.2px;line-height:15px;color:#111;font-weight:normal;transform:scaleX(1.051);transform-origin:right;">1.00</div>
<div class="t" style="right:1150px;top:738.7px;font-size:11.2px;line-height:15px;color:#111;font-weight:normal;transform:scaleX(1.029);transform-origin:right;">1.00(mm)</div>
<div class="t" style="right:1063px;top:738.7px;font-size:11.2px;line-height:15px;color:#111;font-weight:normal;transform:scaleX(1.027);transform-origin:right;">21.75%</div>
<div class="a" style="left:789px;top:739px;width:91px;height:14px;background:#0000ee;border:1px solid #111"></div>
<div class="t" style="left:110.5px;top:755.0px;font-size:11.2px;line-height:15px;color:#111;font-weight:normal;">3</div>
<div class="t" style="left:169.5px;top:755.0px;font-size:11.2px;line-height:15px;color:#111;font-weight:normal;transform:scaleX(0.915);transform-origin:left;">HP_Align_(WHEEL__SHAFT_STP)</div>
<div class="t" style="left:351.5px;top:755.0px;font-size:11.2px;line-height:15px;color:#111;font-weight:normal;transform:scaleX(1.003);transform-origin:left;">Pulley_DVM_Asm</div>
<div class="t" style="right:1287px;top:755.0px;font-size:11.2px;line-height:15px;color:#111;font-weight:normal;transform:scaleX(1.029);transform-origin:right;">0.70(mm)</div>
<div class="t" style="right:1221px;top:755.0px;font-size:11.2px;line-height:15px;color:#111;font-weight:normal;transform:scaleX(1.046);transform-origin:right;">-1.00</div>
<div class="t" style="right:1150px;top:755.0px;font-size:11.2px;line-height:15px;color:#111;font-weight:normal;transform:scaleX(1.029);transform-origin:right;">0.96(mm)</div>
<div class="t" style="right:1063px;top:755.0px;font-size:11.2px;line-height:15px;color:#111;font-weight:normal;transform:scaleX(1.027);transform-origin:right;">20.17%</div>
<div class="a" style="left:789px;top:755px;width:84px;height:14px;background:#0000ee;border:1px solid #111"></div>
<div class="t" style="left:110.5px;top:771.2px;font-size:11.2px;line-height:15px;color:#111;font-weight:normal;">4</div>
<div class="t" style="left:169.5px;top:771.2px;font-size:11.2px;line-height:15px;color:#111;font-weight:normal;transform:scaleX(1.033);transform-origin:left;">Pos_Bushing_Hole_(Orientation)</div>
<div class="t" style="left:351.5px;top:771.2px;font-size:11.2px;line-height:15px;color:#111;font-weight:normal;transform:scaleX(0.873);transform-origin:left;">STAND</div>
<div class="t" style="right:1287px;top:771.2px;font-size:11.2px;line-height:15px;color:#111;font-weight:normal;transform:scaleX(1.029);transform-origin:right;">0.12(mm)</div>
<div class="t" style="right:1221px;top:771.2px;font-size:11.2px;line-height:15px;color:#111;font-weight:normal;transform:scaleX(1.051);transform-origin:right;">6.60</div>
<div class="t" style="right:1150px;top:771.2px;font-size:11.2px;line-height:15px;color:#111;font-weight:normal;transform:scaleX(1.029);transform-origin:right;">0.81(mm)</div>
<div class="t" style="right:1063px;top:771.2px;font-size:11.2px;line-height:15px;color:#111;font-weight:normal;transform:scaleX(1.027);transform-origin:right;">14.21%</div>
<div class="a" style="left:789px;top:772px;width:58px;height:14px;background:#0000ee;border:1px solid #111"></div>
<div class="t" style="left:110.5px;top:787.5px;font-size:11.2px;line-height:15px;color:#111;font-weight:normal;">5</div>
<div class="t" style="left:169.5px;top:787.5px;font-size:11.2px;line-height:15px;color:#111;font-weight:normal;transform:scaleX(1.033);transform-origin:left;">Position_1_(Location)</div>
<div class="t" style="left:351.5px;top:787.5px;font-size:11.2px;line-height:15px;color:#111;font-weight:normal;transform:scaleX(0.886);transform-origin:left;">WHEEL</div>
<div class="t" style="right:1287px;top:787.5px;font-size:11.2px;line-height:15px;color:#111;font-weight:normal;transform:scaleX(1.029);transform-origin:right;">0.60(mm)</div>
<div class="t" style="right:1221px;top:787.5px;font-size:11.2px;line-height:15px;color:#111;font-weight:normal;transform:scaleX(1.046);transform-origin:right;">-1.00</div>
<div class="t" style="right:1150px;top:787.5px;font-size:11.2px;line-height:15px;color:#111;font-weight:normal;transform:scaleX(1.029);transform-origin:right;">0.58(mm)</div>
<div class="t" style="right:1063px;top:787.5px;font-size:11.2px;line-height:15px;color:#111;font-weight:normal;transform:scaleX(1.039);transform-origin:right;">7.34%</div>
<div class="a" style="left:789px;top:788px;width:30px;height:14px;background:#0000ee;border:1px solid #111"></div>
<div class="t" style="left:110.5px;top:803.7px;font-size:11.2px;line-height:15px;color:#111;font-weight:normal;">6</div>
<div class="t" style="left:169.5px;top:803.7px;font-size:11.2px;line-height:15px;color:#111;font-weight:normal;transform:scaleX(1.011);transform-origin:left;">Pos_Bushing_Hole_(Location)</div>
<div class="t" style="left:351.5px;top:803.7px;font-size:11.2px;line-height:15px;color:#111;font-weight:normal;transform:scaleX(0.873);transform-origin:left;">STAND</div>
<div class="t" style="right:1287px;top:803.7px;font-size:11.2px;line-height:15px;color:#111;font-weight:normal;transform:scaleX(1.029);transform-origin:right;">0.50(mm)</div>
<div class="t" style="right:1221px;top:803.7px;font-size:11.2px;line-height:15px;color:#111;font-weight:normal;transform:scaleX(1.046);transform-origin:right;">-1.00</div>
<div class="t" style="right:1150px;top:803.7px;font-size:11.2px;line-height:15px;color:#111;font-weight:normal;transform:scaleX(1.029);transform-origin:right;">0.48(mm)</div>
<div class="t" style="right:1063px;top:803.7px;font-size:11.2px;line-height:15px;color:#111;font-weight:normal;transform:scaleX(1.039);transform-origin:right;">5.10%</div>
<div class="a" style="left:789px;top:804px;width:20px;height:14px;background:#0000ee;border:1px solid #111"></div>
<div class="t" style="left:110.5px;top:819.9px;font-size:11.2px;line-height:15px;color:#111;font-weight:normal;">7</div>
<div class="t" style="left:169.5px;top:819.9px;font-size:11.2px;line-height:15px;color:#111;font-weight:normal;transform:scaleX(0.916);transform-origin:left;">HP_Align_(SHAFT_STP__BUSHING)</div>
<div class="t" style="left:351.5px;top:819.9px;font-size:11.2px;line-height:15px;color:#111;font-weight:normal;transform:scaleX(1.003);transform-origin:left;">Pulley_DVM_Asm</div>
<div class="t" style="right:1287px;top:819.9px;font-size:11.2px;line-height:15px;color:#111;font-weight:normal;transform:scaleX(1.029);transform-origin:right;">0.40(mm)</div>
<div class="t" style="right:1221px;top:819.9px;font-size:11.2px;line-height:15px;color:#111;font-weight:normal;transform:scaleX(1.046);transform-origin:right;">-1.00</div>
<div class="t" style="right:1150px;top:819.9px;font-size:11.2px;line-height:15px;color:#111;font-weight:normal;transform:scaleX(1.029);transform-origin:right;">0.44(mm)</div>
<div class="t" style="right:1063px;top:819.9px;font-size:11.2px;line-height:15px;color:#111;font-weight:normal;transform:scaleX(1.039);transform-origin:right;">4.13%</div>
<div class="a" style="left:789px;top:820px;width:16px;height:14px;background:#0000ee;border:1px solid #111"></div>
<div class="t" style="left:110.5px;top:836.2px;font-size:11.2px;line-height:15px;color:#111;font-weight:normal;">8</div>
<div class="t" style="left:169.5px;top:836.2px;font-size:11.2px;line-height:15px;color:#111;font-weight:normal;transform:scaleX(1.033);transform-origin:left;">Position_3_(Location)</div>
<div class="t" style="left:351.5px;top:836.2px;font-size:11.2px;line-height:15px;color:#111;font-weight:normal;transform:scaleX(0.853);transform-origin:left;">SHAFT_STP</div>
<div class="t" style="right:1287px;top:836.2px;font-size:11.2px;line-height:15px;color:#111;font-weight:normal;transform:scaleX(1.029);transform-origin:right;">0.30(mm)</div>
<div class="t" style="right:1221px;top:836.2px;font-size:11.2px;line-height:15px;color:#111;font-weight:normal;transform:scaleX(1.046);transform-origin:right;">-1.00</div>
<div class="t" style="right:1150px;top:836.2px;font-size:11.2px;line-height:15px;color:#111;font-weight:normal;transform:scaleX(1.029);transform-origin:right;">0.29(mm)</div>
<div class="t" style="right:1063px;top:836.2px;font-size:11.2px;line-height:15px;color:#111;font-weight:normal;transform:scaleX(1.039);transform-origin:right;">1.83%</div>
<div class="a" style="left:789px;top:837px;width:7px;height:14px;background:#0000ee;border:1px solid #111"></div>
<div class="t" style="left:110.5px;top:852.4px;font-size:11.2px;line-height:15px;color:#111;font-weight:normal;">9</div>
<div class="t" style="left:169.5px;top:852.4px;font-size:11.2px;line-height:15px;color:#111;font-weight:normal;transform:scaleX(1.033);transform-origin:left;">Pos_Shaft_Pin_(Orientation)</div>
<div class="t" style="left:351.5px;top:852.4px;font-size:11.2px;line-height:15px;color:#111;font-weight:normal;transform:scaleX(0.911);transform-origin:left;">BUSHING</div>
<div class="t" style="right:1287px;top:852.4px;font-size:11.2px;line-height:15px;color:#111;font-weight:normal;transform:scaleX(1.029);transform-origin:right;">0.05(mm)</div>
<div class="t" style="right:1221px;top:852.4px;font-size:11.2px;line-height:15px;color:#111;font-weight:normal;transform:scaleX(1.046);transform-origin:right;">-5.47</div>
<div class="t" style="right:1150px;top:852.4px;font-size:11.2px;line-height:15px;color:#111;font-weight:normal;transform:scaleX(1.029);transform-origin:right;">0.27(mm)</div>
<div class="t" style="right:1063px;top:852.4px;font-size:11.2px;line-height:15px;color:#111;font-weight:normal;transform:scaleX(1.039);transform-origin:right;">1.56%</div>
<div class="a" style="left:789px;top:853px;width:5px;height:14px;background:#0000ee;border:1px solid #111"></div>
<div class="t" style="left:110.5px;top:868.7px;font-size:11.2px;line-height:15px;color:#111;font-weight:normal;">10</div>
<div class="t" style="left:169.5px;top:868.7px;font-size:11.2px;line-height:15px;color:#111;font-weight:normal;transform:scaleX(1.007);transform-origin:left;">Pos_Shaft_Pin_(Location)</div>
<div class="t" style="left:351.5px;top:868.7px;font-size:11.2px;line-height:15px;color:#111;font-weight:normal;transform:scaleX(0.911);transform-origin:left;">BUSHING</div>
<div class="t" style="right:1287px;top:868.7px;font-size:11.2px;line-height:15px;color:#111;font-weight:normal;transform:scaleX(1.029);transform-origin:right;">0.20(mm)</div>
<div class="t" style="right:1221px;top:868.7px;font-size:11.2px;line-height:15px;color:#111;font-weight:normal;transform:scaleX(1.046);transform-origin:right;">-1.00</div>
<div class="t" style="right:1150px;top:868.7px;font-size:11.2px;line-height:15px;color:#111;font-weight:normal;transform:scaleX(1.029);transform-origin:right;">0.19(mm)</div>
<div class="t" style="right:1063px;top:868.7px;font-size:11.2px;line-height:15px;color:#111;font-weight:normal;transform:scaleX(1.039);transform-origin:right;">0.82%</div>
<div class="a" style="left:789px;top:869px;width:2px;height:14px;background:#0000ee;border-left:1px solid #111"></div>
<div class="a" style="left:107px;top:880px;width:957px;height:1px;background:#111"></div>
<svg class="a" style="left:258px;top:731px;" width="12" height="18" viewBox="0 0 12 18"><path d="M1 1v14l3.5-3.5 2.5 5.5 2-1-2.5-5.5H11z" fill="#fff" stroke="#111" stroke-width="1"/></svg>
</body></html>
